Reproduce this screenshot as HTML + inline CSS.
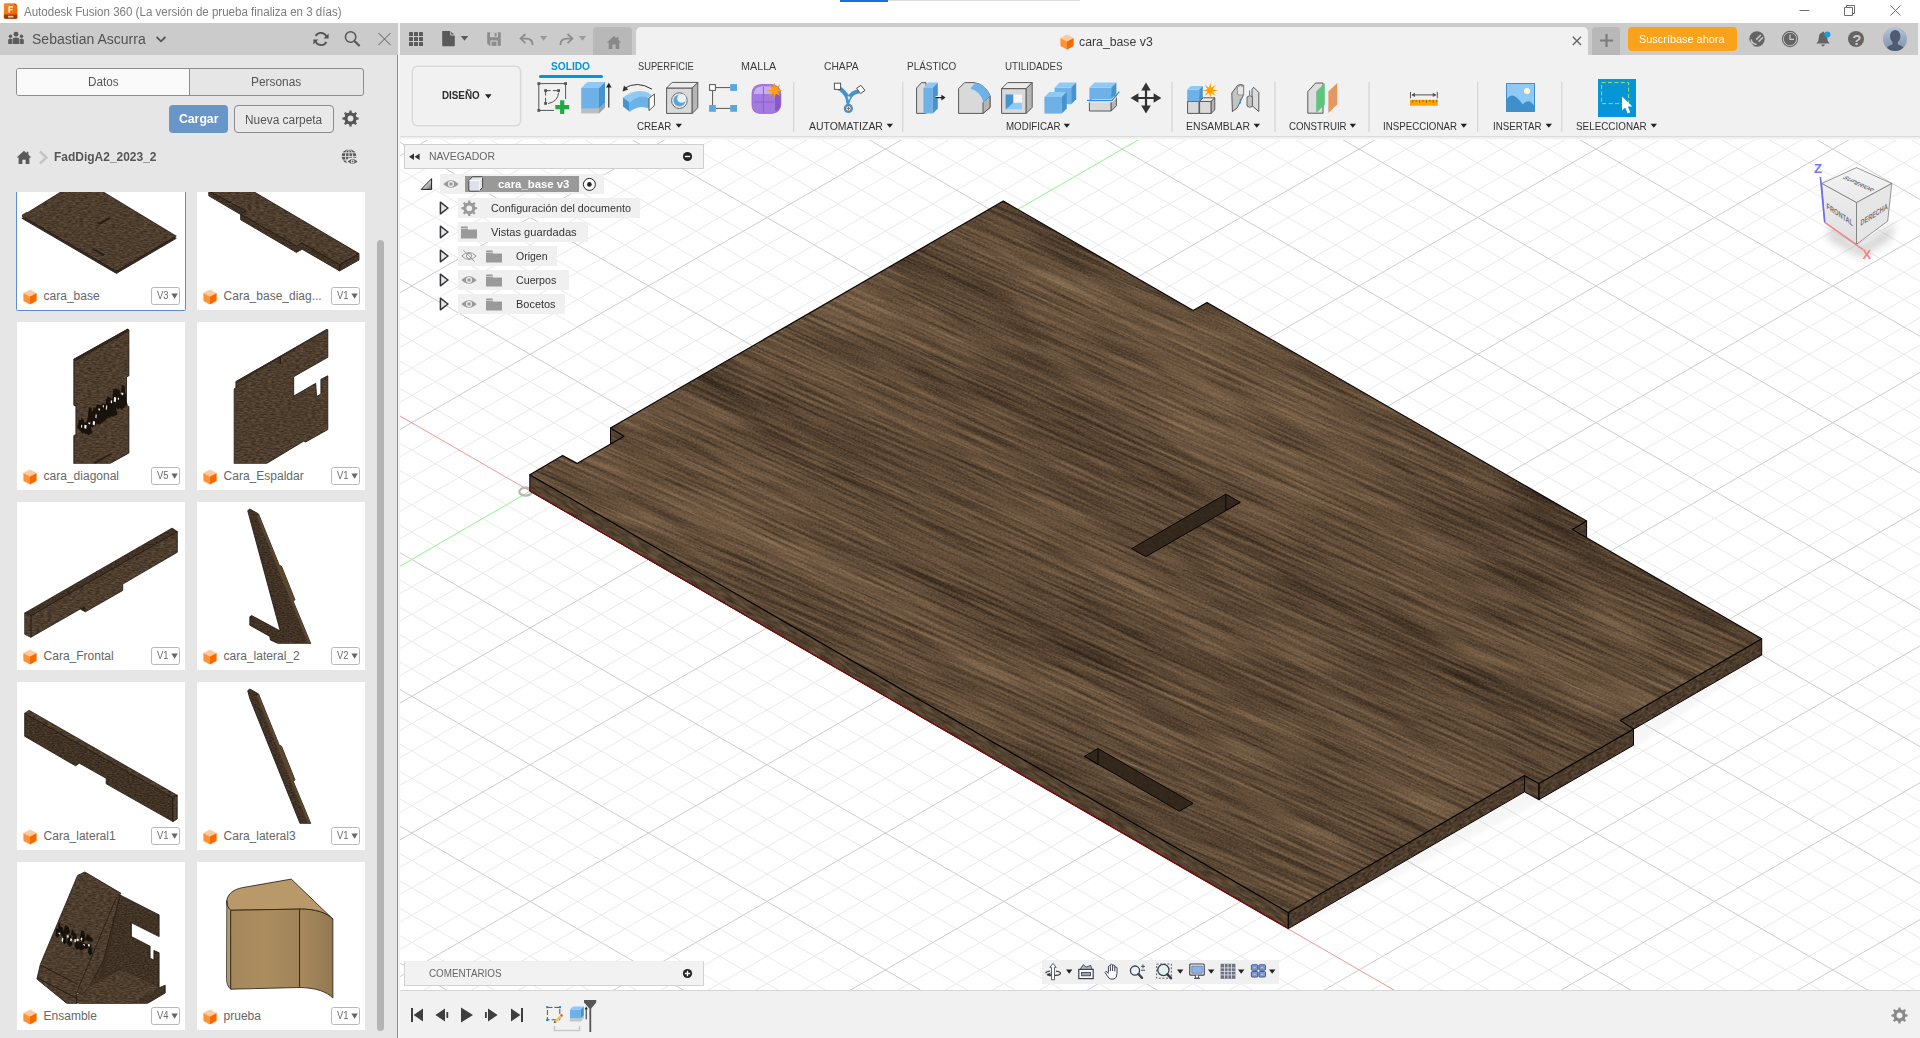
<!DOCTYPE html>
<html lang="es"><head><meta charset="utf-8"><title>Autodesk Fusion 360</title><style>
html,body{margin:0;padding:0;background:#fff}
body{width:1920px;height:1038px;overflow:hidden;position:relative;font-family:"Liberation Sans",sans-serif}
.a{position:absolute;display:block}
.t{position:absolute;white-space:nowrap;transform-origin:0 0;display:block}
svg{overflow:hidden}
</style></head><body>
<svg class="a" style="left:400px;top:140px" width="1520" height="850" viewBox="400 140 1520 850"><path d="M400 990.52L1920 1868.41M400 935.80L1920 1813.69M400 908.44L1920 1786.33M400 881.08L1920 1758.97M400 853.72L1920 1731.61M400 799.00L1920 1676.89M400 771.64L1920 1649.53M400 744.28L1920 1622.17M400 716.92L1920 1594.81M400 662.20L1920 1540.09M400 634.84L1920 1512.73M400 607.48L1920 1485.37M400 580.12L1920 1458.01M400 525.40L1920 1403.29M400 498.04L1920 1375.93M400 470.68L1920 1348.57M400 443.32L1920 1321.21M400 388.60L1920 1266.49M400 361.24L1920 1239.13M400 333.88L1920 1211.77M400 306.52L1920 1184.41M400 251.80L1920 1129.69M400 224.44L1920 1102.33M400 197.08L1920 1074.97M400 169.72L1920 1047.61M400 115.00L1920 992.89M400 87.64L1920 965.53M400 60.28L1920 938.17M400 32.92L1920 910.81M400 -21.80L1920 856.09M400 -49.16L1920 828.73M400 -76.52L1920 801.37M400 -103.88L1920 774.01M400 -158.60L1920 719.29M400 -185.96L1920 691.93M400 -213.32L1920 664.57M400 -240.68L1920 637.21M400 -295.40L1920 582.49M400 -322.76L1920 555.13M400 -350.12L1920 527.77M400 -377.48L1920 500.41M400 -432.20L1920 445.69M400 -459.56L1920 418.33M400 -486.92L1920 390.97M400 -514.28L1920 363.61M400 -569.00L1920 308.89M400 -596.36L1920 281.53M400 -623.72L1920 254.17M400 -651.08L1920 226.81M400 -705.80L1920 172.09M400 -733.16L1920 144.73M400 183.20L1920 -694.69M400 210.56L1920 -667.33M400 237.92L1920 -639.97M400 265.28L1920 -612.61M400 320.00L1920 -557.89M400 347.36L1920 -530.53M400 374.72L1920 -503.17M400 402.08L1920 -475.81M400 456.80L1920 -421.09M400 484.16L1920 -393.73M400 511.52L1920 -366.37M400 538.88L1920 -339.01M400 593.60L1920 -284.29M400 620.96L1920 -256.93M400 648.32L1920 -229.57M400 675.68L1920 -202.21M400 730.40L1920 -147.49M400 757.76L1920 -120.13M400 785.12L1920 -92.77M400 812.48L1920 -65.41M400 867.20L1920 -10.69M400 894.56L1920 16.67M400 921.92L1920 44.03M400 949.28L1920 71.39M400 1004.00L1920 126.11M400 1031.36L1920 153.47M400 1058.72L1920 180.83M400 1086.08L1920 208.19M400 1140.80L1920 262.91M400 1168.16L1920 290.27M400 1195.52L1920 317.63M400 1222.88L1920 344.99M400 1277.60L1920 399.71M400 1304.96L1920 427.07M400 1332.32L1920 454.43M400 1359.68L1920 481.79M400 1414.40L1920 536.51M400 1441.76L1920 563.87M400 1469.12L1920 591.23M400 1496.48L1920 618.59M400 1551.20L1920 673.31M400 1578.56L1920 700.67M400 1605.92L1920 728.03M400 1633.28L1920 755.39M400 1688.00L1920 810.11M400 1715.36L1920 837.47M400 1742.72L1920 864.83M400 1770.08L1920 892.19M400 1824.80L1920 946.91M400 1852.16L1920 974.27" stroke="#e9e9e9" stroke-width="1" fill="none"/><path d="M400 963.16L1920 1841.05M400 826.36L1920 1704.25M400 689.56L1920 1567.45M400 552.76L1920 1430.65M400 279.16L1920 1157.05M400 142.36L1920 1020.25M400 5.56L1920 883.45M400 -131.24L1920 746.65M400 -268.04L1920 609.85M400 -404.84L1920 473.05M400 -541.64L1920 336.25M400 -678.44L1920 199.45M400 155.84L1920 -722.05M400 292.64L1920 -585.25M400 429.44L1920 -448.45M400 703.04L1920 -174.85M400 839.84L1920 -38.05M400 976.64L1920 98.75M400 1113.44L1920 235.55M400 1250.24L1920 372.35M400 1387.04L1920 509.15M400 1523.84L1920 645.95M400 1660.64L1920 782.75M400 1797.44L1920 919.55" stroke="#cdcdcd" stroke-width="1" fill="none"/><path d="M400 415.96L1920 1293.85" stroke="#f79494" stroke-width="1" fill="none"/><path d="M400 566.24L1920 -311.65" stroke="#8cf58c" stroke-width="1" fill="none"/><ellipse cx="525.6" cy="491.70000000000005" rx="6.2" ry="4" fill="none" stroke="#b6b6b6" stroke-width="2.2"/><defs>
<filter id="wood" filterUnits="userSpaceOnUse" x="380" y="-220" width="1540" height="1560" color-interpolation-filters="sRGB">
<feTurbulence type="fractalNoise" baseFrequency="0.011 0.33" numOctaves="3" seed="11"/>
<feColorMatrix type="matrix" values="1 0 0 0 0 1 0 0 0 0 1 0 0 0 0 0 0 0 0 1" result="a"/>
<feTurbulence type="fractalNoise" baseFrequency="0.0022 0.022" numOctaves="2" seed="4"/>
<feColorMatrix type="matrix" values="1 0 0 0 0 1 0 0 0 0 1 0 0 0 0 0 0 0 0 1" result="b"/>
<feTurbulence type="fractalNoise" baseFrequency="0.5 0.9" numOctaves="2" seed="2"/>
<feColorMatrix type="matrix" values="1 0 0 0 0 1 0 0 0 0 1 0 0 0 0 0 0 0 0 1" result="c"/>
<feComposite in="a" in2="b" operator="arithmetic" k1="0" k2="0.62" k3="0.38" k4="0" result="ab"/>
<feComposite in="ab" in2="c" operator="arithmetic" k1="0" k2="1" k3="0.38" k4="-0.19"/>
<feComponentTransfer><feFuncR type="table" tableValues="0.13 0.21 0.37 0.52 0.60"/><feFuncG type="table" tableValues="0.095 0.16 0.292 0.415 0.485"/><feFuncB type="table" tableValues="0.065 0.115 0.215 0.31 0.365"/></feComponentTransfer>
</filter>
<filter id="woodd" filterUnits="userSpaceOnUse" x="380" y="-220" width="1540" height="1560" color-interpolation-filters="sRGB">
<feTurbulence type="fractalNoise" baseFrequency="0.25 0.45" numOctaves="2" seed="5"/>
<feColorMatrix type="matrix" values="1 0 0 0 0 1 0 0 0 0 1 0 0 0 0 0 0 0 0 1" result="a"/>
<feTurbulence type="fractalNoise" baseFrequency="0.5 0.8" numOctaves="1" seed="9"/>
<feColorMatrix type="matrix" values="1 0 0 0 0 1 0 0 0 0 1 0 0 0 0 0 0 0 0 1" result="c"/>
<feComposite in="a" in2="c" operator="arithmetic" k1="0" k2="1" k3="0.25" k4="-0.125"/>
<feComponentTransfer><feFuncR type="table" tableValues="0.17 0.22 0.30 0.38 0.43"/><feFuncG type="table" tableValues="0.125 0.17 0.235 0.30 0.34"/><feFuncB type="table" tableValues="0.09 0.12 0.175 0.225 0.255"/></feComponentTransfer>
</filter>
<filter id="woodl" filterUnits="userSpaceOnUse" x="380" y="-220" width="1540" height="1560" color-interpolation-filters="sRGB">
<feTurbulence type="fractalNoise" baseFrequency="0.08 0.45" numOctaves="2" seed="6"/>
<feColorMatrix type="matrix" values="1 0 0 0 0 1 0 0 0 0 1 0 0 0 0 0 0 0 0 1" result="a"/>
<feTurbulence type="fractalNoise" baseFrequency="0.5 0.8" numOctaves="1" seed="9"/>
<feColorMatrix type="matrix" values="1 0 0 0 0 1 0 0 0 0 1 0 0 0 0 0 0 0 0 1" result="c"/>
<feComposite in="a" in2="c" operator="arithmetic" k1="0" k2="1" k3="0.25" k4="-0.125"/>
<feComponentTransfer><feFuncR type="table" tableValues="0.20 0.25 0.33 0.41 0.46"/><feFuncG type="table" tableValues="0.15 0.195 0.262 0.33 0.37"/><feFuncB type="table" tableValues="0.105 0.14 0.192 0.245 0.28"/></feComponentTransfer>
</filter>
<filter id="bsh" x="-10%" y="-10%" width="120%" height="130%"><feGaussianBlur stdDeviation="2"/></filter>
<clipPath id="ctop"><polygon points="529.8,474.8 562.6,455.6 577.0,463.4 624.0,436.3 610.5,428.0 1003.3,201.1 1193.2,310.6 1207.0,302.4 1586.6,521.0 1572.3,529.5 1761.7,638.8 1620.3,720.6 1633.5,729.0 1538.9,783.5 1524.5,775.6 1288.3,912.4"/></clipPath><clipPath id="csl"><polygon points="624.0,436.3 610.5,428.0 610.5,444.2 624.0,452.5"/><polygon points="1538.9,783.5 1524.5,775.6 1524.5,791.8 1538.9,799.7"/><polygon points="1288.3,912.4 529.8,474.8 529.8,491.0 1288.3,928.6"/></clipPath><clipPath id="csr"><polygon points="1586.6,521.0 1572.3,529.5 1572.3,545.7 1586.6,537.2"/><polygon points="1761.7,638.8 1620.3,720.6 1620.3,736.8 1761.7,655.0"/><polygon points="1633.5,729.0 1538.9,783.5 1538.9,799.7 1633.5,745.2"/><polygon points="1524.5,775.6 1288.3,912.4 1288.3,928.6 1524.5,791.8"/></clipPath><clipPath id="cslot"><polygon points="1225.9,494.1 1240.3,502.3 1145.8,556.7 1131.7,548.6"/><polygon points="1098.0,748.5 1193.1,803.3 1179.3,811.2 1084.5,756.3"/></clipPath></defs><polygon points="1762.7,658.0 1634.5,748.7 1539.9,802.6 1289.3,931.6 1289.3,915.0 1762.7,643.0" fill="#000" opacity="0.03" filter="url(#bsh)"/><g clip-path="url(#csl)"><g transform="rotate(30 1150 560)"><rect x="380" y="-220" width="1540" height="1560" filter="url(#woodl)"/></g></g><g clip-path="url(#csr)"><g transform="rotate(-30 1150 560)"><rect x="380" y="-220" width="1540" height="1560" filter="url(#woodd)"/></g></g><polygon points="624.0,436.3 610.5,428.0 610.5,444.2 624.0,452.5" fill="none" stroke="#0a0604" stroke-width="1" stroke-linejoin="round"/><polygon points="1586.6,521.0 1572.3,529.5 1572.3,545.7 1586.6,537.2" fill="none" stroke="#0a0604" stroke-width="1" stroke-linejoin="round"/><polygon points="1761.7,638.8 1620.3,720.6 1620.3,736.8 1761.7,655.0" fill="none" stroke="#0a0604" stroke-width="1" stroke-linejoin="round"/><polygon points="1633.5,729.0 1538.9,783.5 1538.9,799.7 1633.5,745.2" fill="none" stroke="#0a0604" stroke-width="1" stroke-linejoin="round"/><polygon points="1538.9,783.5 1524.5,775.6 1524.5,791.8 1538.9,799.7" fill="none" stroke="#0a0604" stroke-width="1" stroke-linejoin="round"/><polygon points="1524.5,775.6 1288.3,912.4 1288.3,928.6 1524.5,791.8" fill="none" stroke="#0a0604" stroke-width="1" stroke-linejoin="round"/><polygon points="1288.3,912.4 529.8,474.8 529.8,491.0 1288.3,928.6" fill="none" stroke="#0a0604" stroke-width="1" stroke-linejoin="round"/><path d="M529.8 491.0L1288.3 928.6" stroke="#7e0808" stroke-width="1.2" fill="none"/><g clip-path="url(#ctop)"><g transform="rotate(24 1150 560)"><rect x="380" y="-220" width="1540" height="1560" filter="url(#wood)"/></g></g><path clip-path="url(#ctop)" d="M400 -492.4L1920 168.8M400 -463.7L1920 197.5M400 -434.6L1920 226.6M400 -404.1L1920 257.1M400 -375.4L1920 285.8M400 -345.1L1920 316.1M400 -322.9L1920 338.3M400 -296.7L1920 364.5M400 -266.2L1920 395.0M400 -238.3L1920 422.9M400 -208.2L1920 453.0M400 -185.2L1920 476.0M400 -159.0L1920 502.2M400 -134.8L1920 526.4M400 -107.9L1920 553.3M400 -80.7L1920 580.5M400 -58.6L1920 602.6M400 -34.6L1920 626.6M400 -10.1L1920 651.1M400 20.1L1920 681.3M400 49.0L1920 710.2M400 72.4L1920 733.6M400 101.6L1920 762.8M400 124.9L1920 786.1M400 152.4L1920 813.6M400 175.6L1920 836.8M400 197.6L1920 858.8M400 227.4L1920 888.6M400 251.3L1920 912.5M400 275.3L1920 936.5M400 306.1L1920 967.3M400 335.9L1920 997.1M400 360.6L1920 1021.8M400 391.2L1920 1052.4M400 418.1L1920 1079.3M400 446.2L1920 1107.4M400 470.0L1920 1131.2M400 500.5L1920 1161.7M400 528.7L1920 1189.9M400 559.4L1920 1220.6M400 589.4L1920 1250.6M400 614.1L1920 1275.3M400 639.4L1920 1300.6M400 662.9L1920 1324.1M400 686.2L1920 1347.4M400 708.8L1920 1370.0M400 733.5L1920 1394.7M400 760.9L1920 1422.1M400 782.9L1920 1444.1M400 811.0L1920 1472.2M400 836.1L1920 1497.3M400 860.9L1920 1522.1M400 890.2L1920 1551.4M400 916.6L1920 1577.8M400 941.4L1920 1602.6M400 967.7L1920 1628.9M400 996.1L1920 1657.3M400 1018.6L1920 1679.8" stroke="#b9b0a4" stroke-opacity="0.17" stroke-width="0.8" fill="none"/><g clip-path="url(#cslot)"><rect x="1080" y="490" width="170" height="330" fill="#2e2319"/><g opacity="0.22" transform="rotate(30 1150 560)"><rect x="380" y="-220" width="1540" height="1560" filter="url(#woodd)"/></g></g><polygon points="1225.9,494.1 1240.3,502.3 1145.8,556.7 1131.7,548.6" fill="none" stroke="#0a0604" stroke-width="1"/><polygon points="1098.0,748.5 1193.1,803.3 1179.3,811.2 1084.5,756.3" fill="none" stroke="#0a0604" stroke-width="1"/><path d="M1225.9 494.1V510.3L1240.3 502.3M1098 748.5V764.6L1084.5 756.3" stroke="#0a0604" stroke-width="1" fill="none"/><polygon points="529.8,474.8 562.6,455.6 577.0,463.4 624.0,436.3 610.5,428.0 1003.3,201.1 1193.2,310.6 1207.0,302.4 1586.6,521.0 1572.3,529.5 1761.7,638.8 1620.3,720.6 1633.5,729.0 1538.9,783.5 1524.5,775.6 1288.3,912.4" fill="none" stroke="#0a0604" stroke-width="1.2" stroke-linejoin="round"/></svg>
<div class="a" style="left:0px;top:0px;width:1920px;height:23px;background:#fff;"></div>
<div class="a" style="left:840px;top:0px;width:48px;height:2px;background:#1f6fd0;"></div>
<div class="a" style="left:888px;top:0px;width:192px;height:1px;background:#dcdcdc;"></div>
<svg class="a" style="left:3px;top:2px;" width="16" height="18" viewBox="0 0 16 18"><defs><linearGradient id="fz" x1="0" y1="0" x2="1" y2="1"><stop offset="0" stop-color="#ff8a1f"/><stop offset="1" stop-color="#f05a00"/></linearGradient></defs>
<path d="M2.2 1.2H11.5L14.3 3.3V15.4Q14.3 16.8 13 16.8H2.2Q0.9 16.8 0.9 15.4V2.5Q0.9 1.2 2.2 1.2Z" fill="url(#fz)"/>
<path d="M0.9 12.6H14.3V15.4Q14.3 16.8 13 16.8H2.2Q0.9 16.8 0.9 15.4Z" fill="#9c3a05"/>
<path d="M11.5 1.2L14.3 3.3H11.5Z" fill="#c44a02"/>
<path d="M5.4 10.6V4.3H10V5.6H6.9V6.9H9.5V8.2H6.9V10.6Z" fill="#fff"/>
<rect x="5" y="13.8" width="5.4" height="1.7" fill="#f7c9a8"/></svg>
<span class="t" style="left:23.50px;top:6.04px;font-size:12px;line-height:12px;color:#7c7c7c;transform:scaleX(0.9616);">Autodesk Fusion 360 (La versión de prueba finaliza en 3 días)</span>
<svg class="a" style="left:1790px;top:0px;" width="130" height="23" viewBox="0 0 130 23"><g stroke="#6e6e6e" stroke-width="1" fill="none"><path d="M9.5 10.5H19.5"/><path d="M54.5 7.5H62.5V15.5H54.5ZM56.5 7.5V5.5H64.5V13.5H62.5"/><path d="M100.5 5.5L110.5 15.5M110.5 5.5L100.5 15.5"/></g></svg>
<div class="a" style="left:0px;top:23px;width:398px;height:32px;background:#cbcbcb;"></div>
<svg class="a" style="left:8px;top:31px;" width="17" height="14" viewBox="0 0 17 14"><g fill="#5c5c5c"><circle cx="8" cy="3.2" r="2.4"/><path d="M4.6 13V8.6Q4.6 6.4 8 6.4Q11.4 6.4 11.4 8.6V13Z"/><circle cx="2.5" cy="5.2" r="1.7"/><path d="M0.2 13V9.6Q0.2 7.6 2.5 7.6Q3.8 7.6 4 8.2V13Z"/><circle cx="13.5" cy="5.2" r="1.7"/><path d="M15.8 13V9.6Q15.8 7.6 13.5 7.6Q12.2 7.6 12 8.2V13Z"/></g></svg>
<span class="t" style="left:32.30px;top:32.15px;font-size:14px;line-height:14px;color:#525252;transform:scaleX(1.0008);">Sebastian Ascurra</span>
<svg class="a" style="left:155px;top:35px;" width="12" height="9" viewBox="0 0 12 9"><path d="M1.6 2L6 6.3L10.4 2" stroke="#555" stroke-width="1.8" fill="none"/></svg>
<svg class="a" style="left:312px;top:31px;" width="18" height="16" viewBox="0 0 18 16"><g stroke="#555" stroke-width="1.9" fill="none"><path d="M14.6 6.2A6 6 0 0 0 3.6 5"/><path d="M3.4 9.8A6 6 0 0 0 14.4 11"/></g><path d="M16.6 2.6V7.6H11.6Z" fill="#555"/><path d="M1.4 13.4V8.4H6.4Z" fill="#555"/></svg>
<svg class="a" style="left:344px;top:30px;" width="18" height="17" viewBox="0 0 18 17"><circle cx="6.6" cy="7" r="5.2" stroke="#555" stroke-width="1.5" fill="none"/><path d="M10.4 10.9L15.6 16" stroke="#555" stroke-width="2.1"/></svg>
<svg class="a" style="left:377px;top:32px;" width="15" height="14" viewBox="0 0 15 14"><path d="M1.5 1L13.5 13M13.5 1L1.5 13" stroke="#5c5c5c" stroke-width="1"/></svg>
<div class="a" style="left:400px;top:23px;width:1518px;height:32px;background:#cbcbcb;"></div>
<div class="a" style="left:1918px;top:23px;width:2px;height:32px;background:#f0f0f0;"></div>
<svg class="a" style="left:408px;top:31px;" width="16" height="16" viewBox="0 0 16 16"><rect x="1" y="1" width="4" height="4" rx="0.6" fill="#5a5a5a"/><rect x="1" y="6" width="4" height="4" rx="0.6" fill="#5a5a5a"/><rect x="1" y="11" width="4" height="4" rx="0.6" fill="#5a5a5a"/><rect x="6" y="1" width="4" height="4" rx="0.6" fill="#5a5a5a"/><rect x="6" y="6" width="4" height="4" rx="0.6" fill="#5a5a5a"/><rect x="6" y="11" width="4" height="4" rx="0.6" fill="#5a5a5a"/><rect x="11" y="1" width="4" height="4" rx="0.6" fill="#5a5a5a"/><rect x="11" y="6" width="4" height="4" rx="0.6" fill="#5a5a5a"/><rect x="11" y="11" width="4" height="4" rx="0.6" fill="#5a5a5a"/></svg>
<svg class="a" style="left:441px;top:30px;" width="16" height="18" viewBox="0 0 16 18"><path d="M1.2 1H9.3L13.8 5.5V15.4Q13.8 16.2 13 16.2H2Q1.2 16.2 1.2 15.4Z" fill="#5a5a5a"/><path d="M9.6 0.8V5.2H14" fill="#cbcbcb" stroke="#cbcbcb" stroke-width="0.6"/><path d="M10.2 1.8L13 4.6H10.2Z" fill="#5a5a5a"/></svg>
<svg class="a" style="left:460px;top:35px;" width="9" height="7" viewBox="0 0 9 7"><path d="M0.8 1H8.2L4.5 5.8Z" fill="#5a5a5a"/></svg>
<svg class="a" style="left:486px;top:31px;" width="16" height="16" viewBox="0 0 16 16"><path d="M1.2 1.2H14.8V14.8H3.6L1.2 12.4Z" fill="#8c8c8c"/><rect x="4" y="1.2" width="8" height="5" fill="#cbcbcb"/><rect x="8.6" y="2" width="2" height="3.4" fill="#8c8c8c"/><rect x="4.4" y="9.4" width="7.2" height="5.4" fill="#cbcbcb"/><rect x="5.6" y="10.6" width="4.8" height="4.2" fill="#8c8c8c"/></svg>
<svg class="a" style="left:519px;top:32px;" width="16" height="14" viewBox="0 0 16 14"><path d="M13.6 13Q13.6 6.6 7 6.6H3" stroke="#8c8c8c" stroke-width="1.8" fill="none"/><path d="M6.4 2L1.6 6.6L6.4 11.2" stroke="#8c8c8c" stroke-width="1.8" fill="none"/></svg>
<svg class="a" style="left:539px;top:35px;" width="9" height="7" viewBox="0 0 9 7"><path d="M0.8 1H8.2L4.5 5.8Z" fill="#9a9a9a"/></svg>
<svg class="a" style="left:558px;top:32px;" width="16" height="14" viewBox="0 0 16 14"><path d="M2.4 13Q2.4 6.6 9 6.6H13" stroke="#8c8c8c" stroke-width="1.8" fill="none"/><path d="M9.6 2L14.4 6.6L9.6 11.2" stroke="#8c8c8c" stroke-width="1.8" fill="none"/></svg>
<svg class="a" style="left:578px;top:35px;" width="9" height="7" viewBox="0 0 9 7"><path d="M0.8 1H8.2L4.5 5.8Z" fill="#9a9a9a"/></svg>
<div class="a" style="left:593px;top:27px;width:39px;height:28px;background:#b8b8b8;border-radius:4px 4px 0 0;"></div>
<svg class="a" style="left:606px;top:35px;" width="16" height="15" viewBox="0 0 16 15"><path d="M8 1L0.8 7.6H2.8V14H6.4V9.6H9.6V14H13.2V7.6H15.2L12.4 5V2H10.6V3.4Z" fill="#888"/></svg>
<div class="a" style="left:636px;top:27px;width:952px;height:28px;background:#f1f1f1;border-radius:5px 5px 0 0;"></div>
<svg class="a" style="left:1060px;top:34px;" width="14" height="16" viewBox="0 0 14 16"><g transform="scale(1.000)"><path d="M7 0.4L13.6 3.9L7 7.6L0.4 3.9Z" fill="#ffc9a0"/><path d="M0.4 3.9L7 7.6V15.6L0.4 12Z" fill="#ff9234"/><path d="M13.6 3.9L7 7.6V15.6L13.6 12Z" fill="#f86a00"/></g></svg>
<span class="t" style="left:1079.20px;top:35.64px;font-size:12px;line-height:12px;color:#3c3c3c;transform:scaleX(1.0230);">cara_base v3</span>
<svg class="a" style="left:1571px;top:35px;" width="12" height="12" viewBox="0 0 12 12"><path d="M1.8 1.8L10 10M10 1.8L1.8 10" stroke="#666" stroke-width="1.4"/></svg>
<div class="a" style="left:1592px;top:27px;width:28px;height:28px;background:#b8b8b8;border-radius:4px 4px 0 0;"></div>
<svg class="a" style="left:1599px;top:33px;" width="15" height="15" viewBox="0 0 15 15"><path d="M7.5 1V14M1 7.5H14" stroke="#7c7c7c" stroke-width="2.2"/></svg>
<div class="a" style="left:1628px;top:27px;width:109px;height:24px;background:#faa21b;border-radius:4px;"></div>
<span class="t" style="left:1638.90px;top:33.69px;font-size:11px;line-height:11px;color:#fff;transform:scaleX(0.9918);">Suscríbase ahora</span>
<svg class="a" style="left:1748px;top:30px;" width="18" height="18" viewBox="0 0 18 18"><circle cx="9" cy="9" r="7.7" fill="#646464"/><path d="M3.2 9.4Q3.4 13.6 8.6 14.6" stroke="#cbcbcb" stroke-width="1.5" fill="none"/><path d="M1.2 11.6L5.4 16.8" stroke="#cbcbcb" stroke-width="1.6" fill="none"/><path d="M8.2 9.6L12.8 5M10.6 11.6L15 7.2" stroke="#cbcbcb" stroke-width="1.5" fill="none"/><path d="M11.6 1.6L16.6 6.4L17.6 1Z" fill="#cbcbcb" opacity="0.0"/></svg>
<svg class="a" style="left:1781px;top:30px;" width="18" height="18" viewBox="0 0 18 18"><circle cx="9" cy="9" r="7.6" stroke="#646464" stroke-width="1.1" fill="none"/><circle cx="9" cy="9" r="6.2" fill="#646464"/><path d="M9 4.6V9.4H13" stroke="#cbcbcb" stroke-width="1.3" fill="none"/></svg>
<svg class="a" style="left:1814px;top:30px;" width="18" height="18" viewBox="0 0 18 18"><path d="M9 1.4Q9.9 1.4 9.9 2.6Q13.2 3.6 13.2 8Q13.2 11.4 15.6 13.4H2.4Q4.8 11.4 4.8 8Q4.8 3.6 8.1 2.6Q8.1 1.4 9 1.4Z" fill="#646464"/><path d="M7 14.6H11Q10.6 16.4 9 16.4Q7.4 16.4 7 14.6Z" fill="#646464"/><circle cx="13.4" cy="4.6" r="3" fill="#1b9be0"/></svg>
<svg class="a" style="left:1847px;top:30px;" width="18" height="18" viewBox="0 0 18 18"><circle cx="9" cy="9" r="8" fill="#646464"/></svg>
<span class="t" style="left:1852.30px;top:31.60px;font-size:15px;line-height:15px;color:#cbcbcb;font-weight:bold;">?</span>
<svg class="a" style="left:1883px;top:27px;" width="24" height="24" viewBox="0 0 24 24"><defs><linearGradient id="av" x1="0" y1="0" x2="0" y2="1"><stop offset="0" stop-color="#b4c3d8"/><stop offset="1" stop-color="#7e8fab"/></linearGradient><clipPath id="avc"><circle cx="12" cy="12" r="12"/></clipPath></defs>
<circle cx="12" cy="12" r="12" fill="url(#av)"/><g clip-path="url(#avc)" fill="#4f5b72"><ellipse cx="12.2" cy="9.4" rx="5.2" ry="6.4"/><path d="M9.6 14H14.8V18.4H9.6Z"/><path d="M2.6 25Q3 19 9.4 17.6H15Q21.4 19 21.8 25Z"/></g></svg>
<div class="a" style="left:0px;top:55px;width:397px;height:983px;background:#e6e6e6;"></div>
<div class="a" style="left:397px;top:55px;width:1px;height:983px;background:#8e8e8e;"></div>
<div class="a" style="left:398px;top:23px;width:2px;height:1015px;background:#f4f4f4;"></div>
<div class="a" style="left:16px;top:68px;width:348px;height:28px;background:#e6e6e6;box-sizing:border-box;border:1px solid #8c8c8c;border-radius:3px;"></div>
<div class="a" style="left:17px;top:69px;width:172px;height:26px;background:#fafafa;border-radius:2px 0 0 2px;"></div>
<div class="a" style="left:189px;top:69px;width:1px;height:26px;background:#8c8c8c;"></div>
<span class="t" style="left:87.60px;top:76.04px;font-size:12px;line-height:12px;color:#555;transform:scaleX(0.9762);">Datos</span>
<span class="t" style="left:251.30px;top:76.04px;font-size:12px;line-height:12px;color:#555;transform:scaleX(0.9903);">Personas</span>
<div class="a" style="left:169px;top:105px;width:59px;height:28px;background:#6896c9;border-radius:4px;"></div>
<span class="t" style="left:179.00px;top:113.04px;font-size:12px;line-height:12px;color:#fff;font-weight:bold;transform:scaleX(1.0185);">Cargar</span>
<div class="a" style="left:234px;top:105px;width:100px;height:28px;background:#e9e9e9;box-sizing:border-box;border:1px solid #8c8c8c;border-radius:4px;"></div>
<span class="t" style="left:245.30px;top:113.64px;font-size:12px;line-height:12px;color:#555;transform:scaleX(0.9892);">Nueva carpeta</span>
<svg class="a" style="left:341.6px;top:110.4px;" width="17" height="17" viewBox="0 0 17 17"><polygon points="7.3,2.6 7.4,0.4 9.6,0.4 9.7,2.6 11.8,3.4 13.5,2.0 15.0,3.5 13.6,5.2 14.4,7.3 16.6,7.4 16.6,9.6 14.4,9.7 13.6,11.8 15.0,13.5 13.5,15.0 11.8,13.6 9.7,14.4 9.6,16.6 7.4,16.6 7.3,14.4 5.2,13.6 3.5,15.0 2.0,13.5 3.4,11.8 2.6,9.7 0.4,9.6 0.4,7.4 2.6,7.3 3.4,5.2 2.0,3.5 3.5,2.0 5.2,3.4" fill="#555"/><circle cx="8.5" cy="8.5" r="5.95" fill="#555"/><circle cx="8.5" cy="8.5" r="2.95" fill="#e6e6e6"/></svg>
<svg class="a" style="left:16px;top:150px;" width="16" height="15" viewBox="0 0 16 15"><path d="M8 0.8L0.6 7.6H2.6V14H6.4V9.8H9.6V14H13.4V7.6H15.4L12.4 4.8V1.8H10.6V3.2Z" fill="#5a5a5a"/></svg>
<svg class="a" style="left:38px;top:150px;" width="11" height="15" viewBox="0 0 11 15"><path d="M2 1.5L8.4 7.5L2 13.5" stroke="#c4c4c4" stroke-width="2.4" fill="none"/></svg>
<span class="t" style="left:54.00px;top:151.44px;font-size:12px;line-height:12px;color:#555;font-weight:bold;transform:scaleX(0.9979);">FadDigA2_2023_2</span>
<svg class="a" style="left:341px;top:148px;" width="18" height="18" viewBox="0 0 18 18"><circle cx="8" cy="8.4" r="7.2" fill="#5a5a5a"/><g stroke="#e6e6e6" stroke-width="0.9" fill="none"><path d="M0.8 8.4H15.2M8 1.2V15.6M1.8 4.8H14.2M1.8 12H14.2"/><ellipse cx="8" cy="8.4" rx="3.6" ry="7.2"/></g><ellipse cx="11.6" cy="13.4" rx="6" ry="4" fill="#e6e6e6"/><path d="M6.6 13.4Q11.6 8.4 16.6 13.4Q11.6 18.2 6.6 13.4Z" fill="#5a5a5a"/><circle cx="11.6" cy="13.4" r="1.9" fill="#e6e6e6"/><circle cx="11.6" cy="13.4" r="0.9" fill="#5a5a5a"/></svg>
<svg class="a" style="left:0;top:192px" width="397" height="846" viewBox="0 192 397 846"><defs><clipPath id="ci1"><rect x="17" y="142" width="168" height="141.7"/></clipPath><clipPath id="ci2"><rect x="197" y="142" width="168" height="141.7"/></clipPath><clipPath id="ci3"><rect x="17" y="322" width="168" height="141.7"/></clipPath><clipPath id="ci4"><rect x="197" y="322" width="168" height="141.7"/></clipPath><clipPath id="ci5"><rect x="17" y="502" width="168" height="141.7"/></clipPath><clipPath id="ci6"><rect x="197" y="502" width="168" height="141.7"/></clipPath><clipPath id="ci7"><rect x="17" y="682" width="168" height="141.7"/></clipPath><clipPath id="ci8"><rect x="197" y="682" width="168" height="141.7"/></clipPath><clipPath id="ci9"><rect x="17" y="862" width="168" height="141.7"/></clipPath><clipPath id="ci10"><rect x="197" y="862" width="168" height="141.7"/></clipPath></defs><rect x="16.5" y="141.5" width="169" height="169" fill="#fff" stroke="#5a8fd8" stroke-width="1" rx="1"/><rect x="151.5" y="287.5" width="28" height="17" rx="2" fill="#fff" stroke="#b9b9b9" stroke-width="1"/><path d="M171.4 293.6H177.8L174.6 298.8Z" fill="#666"/><rect x="197" y="142" width="168" height="168" fill="#fff"/><rect x="331.5" y="287.5" width="28" height="17" rx="2" fill="#fff" stroke="#b9b9b9" stroke-width="1"/><path d="M351.4 293.6H357.8L354.6 298.8Z" fill="#666"/><rect x="17" y="322" width="168" height="168" fill="#fff"/><rect x="151.5" y="467.5" width="28" height="17" rx="2" fill="#fff" stroke="#b9b9b9" stroke-width="1"/><path d="M171.4 473.6H177.8L174.6 478.8Z" fill="#666"/><rect x="197" y="322" width="168" height="168" fill="#fff"/><rect x="331.5" y="467.5" width="28" height="17" rx="2" fill="#fff" stroke="#b9b9b9" stroke-width="1"/><path d="M351.4 473.6H357.8L354.6 478.8Z" fill="#666"/><rect x="17" y="502" width="168" height="168" fill="#fff"/><rect x="151.5" y="647.5" width="28" height="17" rx="2" fill="#fff" stroke="#b9b9b9" stroke-width="1"/><path d="M171.4 653.6H177.8L174.6 658.8Z" fill="#666"/><rect x="197" y="502" width="168" height="168" fill="#fff"/><rect x="331.5" y="647.5" width="28" height="17" rx="2" fill="#fff" stroke="#b9b9b9" stroke-width="1"/><path d="M351.4 653.6H357.8L354.6 658.8Z" fill="#666"/><rect x="17" y="682" width="168" height="168" fill="#fff"/><rect x="151.5" y="827.5" width="28" height="17" rx="2" fill="#fff" stroke="#b9b9b9" stroke-width="1"/><path d="M171.4 833.6H177.8L174.6 838.8Z" fill="#666"/><rect x="197" y="682" width="168" height="168" fill="#fff"/><rect x="331.5" y="827.5" width="28" height="17" rx="2" fill="#fff" stroke="#b9b9b9" stroke-width="1"/><path d="M351.4 833.6H357.8L354.6 838.8Z" fill="#666"/><rect x="17" y="862" width="168" height="168" fill="#fff"/><rect x="151.5" y="1007.5" width="28" height="17" rx="2" fill="#fff" stroke="#b9b9b9" stroke-width="1"/><path d="M171.4 1013.6H177.8L174.6 1018.8Z" fill="#666"/><rect x="197" y="862" width="168" height="168" fill="#fff"/><rect x="331.5" y="1007.5" width="28" height="17" rx="2" fill="#fff" stroke="#b9b9b9" stroke-width="1"/><path d="M351.4 1013.6H357.8L354.6 1018.8Z" fill="#666"/><defs>
<filter id="tw" x="0" y="0" width="100%" height="100%" color-interpolation-filters="sRGB">
<feTurbulence type="fractalNoise" baseFrequency="0.25 0.7" numOctaves="2" seed="3"/>
<feColorMatrix type="matrix" values="1 0 0 0 0 1 0 0 0 0 1 0 0 0 0 0 0 0 0 1"/>
<feComponentTransfer><feFuncR type="table" tableValues="0.19 0.24 0.305 0.375 0.43"/><feFuncG type="table" tableValues="0.14 0.185 0.243 0.30 0.345"/><feFuncB type="table" tableValues="0.10 0.135 0.182 0.23 0.26"/></feComponentTransfer>
<feComposite in2="SourceAlpha" operator="in"/></filter>
<filter id="tw2" x="0" y="0" width="100%" height="100%" color-interpolation-filters="sRGB">
<feTurbulence type="fractalNoise" baseFrequency="0.4 0.9" numOctaves="2" seed="8"/>
<feColorMatrix type="matrix" values="1 0 0 0 0 1 0 0 0 0 1 0 0 0 0 0 0 0 0 1"/>
<feComponentTransfer><feFuncR type="table" tableValues="0.16 0.20 0.255 0.315 0.36"/><feFuncG type="table" tableValues="0.115 0.15 0.20 0.25 0.285"/><feFuncB type="table" tableValues="0.08 0.105 0.145 0.19 0.215"/></feComponentTransfer>
<feComposite in2="SourceAlpha" operator="in"/></filter>
</defs><g><polygon points="21.9,218.3 81.8,181.1 176.3,238.3 116.4,273.4" fill="#3a2c20" stroke="#1c140e" stroke-width="0.8" stroke-linejoin="round" /><polygon points="21.9,216.1 81.8,178.9 176.3,236.1 116.4,271.2" fill="#5e4c3a" filter="url(#tw)"/><polygon points="21.9,216.1 81.8,178.9 176.3,236.1 116.4,271.2" fill="none" stroke="#1c140e" stroke-width="0.7" stroke-linejoin="round" /><polygon points="97.7,223.6 108.9,217.3 110.8,218.6 99.5,225.1" fill="#2a1f16" /><polygon points="92.0,249.2 93.9,248.4 105.2,254.6 103.3,256.1" fill="#2a1f16" /><polygon points="21.9,215.1 26.3,212.0 28.8,213.8 33.2,209.8 35.0,211.0 23.8,218.3" fill="#4a3a2b" /></g><g><polygon points="208.8,191.0 208.8,195.8 240.7,214.5 240.7,219.8 296.4,252.4 302.1,249.2 339.6,270.9 359.0,259.9 359.0,253.6 339.6,264.6 302.1,243.0 296.4,246.1 240.7,214.2 246.3,211.0" fill="#46372a" stroke="#1c140e" stroke-width="0.8" stroke-linejoin="round" /><polygon points="208.8,191.0 208.8,195.8 240.7,214.5 240.7,219.8 296.4,252.4 302.1,249.2 339.6,270.9 359.0,259.9 359.0,253.6 339.6,264.6 302.1,243.0 296.4,246.1 240.7,214.2 246.3,211.0" fill="#46372a" filter="url(#tw2)"/><polygon points="208.8,191.0 252.6,191.0 359.0,253.6 339.6,264.6 302.1,243.0 296.4,246.1 240.7,214.2 246.3,211.0" fill="#5e4c3a" filter="url(#tw)"/><polygon points="208.8,191.0 252.6,191.0 359.0,253.6 339.6,264.6 302.1,243.0 296.4,246.1 240.7,214.2 246.3,211.0" fill="none" stroke="#1c140e" stroke-width="0.8" stroke-linejoin="round" /><path d="M339.6 264.6V270.9" stroke="#1c140e" stroke-width="0.8"/></g><g clip-path="url(#ci3)"><polygon points="73.8,359.3 127.9,329.0 128.9,330.7 128.9,375.8 126.5,377.0 126.5,405.3 128.9,406.5 128.9,453.0 109.7,463.7 73.8,463.7 73.8,435.6 75.9,434.6 75.9,406.2 73.8,405.3" fill="#5a4937" filter="url(#tw)"/><polygon points="73.8,359.3 127.9,329.0 128.9,330.7 128.9,375.8 126.5,377.0 126.5,405.3 128.9,406.5 128.9,453.0 109.7,463.7 73.8,463.7 73.8,435.6 75.9,434.6 75.9,406.2 73.8,405.3" fill="none" stroke="#1c140e" stroke-width="0.8" stroke-linejoin="round" /><polygon points="73.8,359.3 127.9,329.0 128.9,330.7 75.5,360.7" fill="#3a2c20" stroke="#1c140e" stroke-width="0.6" stroke-linejoin="round" /><polygon points="78.9,419.4 82.4,420.5 84.8,428.8 80.6,430.7 77.1,427.9" fill="#1a130d" /><polygon points="81.2,417.9 83.4,419.0 84.9,431.3 82.3,434.0 80.1,430.0" fill="#1a130d" /><polygon points="81.5,419.7 83.8,420.7 85.3,429.2 82.7,431.1 80.4,428.2" fill="#1a130d" /><polygon points="84.3,421.7 86.7,422.7 88.3,432.4 85.5,434.6 83.2,431.4" fill="#1a130d" /><polygon points="86.6,420.6 90.0,421.7 92.3,433.0 88.3,435.5 84.9,431.8" fill="#1a130d" /><polygon points="89.3,410.6 93.4,411.6 96.1,421.9 91.4,424.2 87.3,420.8" fill="#1a130d" /><polygon points="88.8,407.0 91.5,408.0 93.4,423.3 90.2,426.6 87.4,421.7" fill="#1a130d" /><polygon points="90.6,413.0 94.1,414.1 96.5,425.2 92.4,427.6 88.8,424.0" fill="#1a130d" /><polygon points="93.4,407.2 95.6,408.3 97.0,417.8 94.5,420.0 92.2,416.8" fill="#1a130d" /><polygon points="95.5,407.6 98.3,408.6 100.1,421.7 96.9,424.6 94.1,420.3" fill="#1a130d" /><polygon points="96.6,404.3 100.5,405.3 103.1,419.5 98.5,422.6 94.6,418.0" fill="#1a130d" /><polygon points="97.7,404.8 101.0,405.9 103.2,421.7 99.4,425.1 96.1,420.0" fill="#1a130d" /><polygon points="100.8,404.8 105.1,405.8 108.0,414.6 103.0,416.5 98.6,413.6" fill="#1a130d" /><polygon points="101.7,406.3 104.1,407.3 105.7,419.5 102.9,422.2 100.4,418.2" fill="#1a130d" /><polygon points="102.3,403.6 106.2,404.6 108.7,417.6 104.3,420.4 100.4,416.2" fill="#1a130d" /><polygon points="106.4,398.4 110.1,399.5 112.5,412.7 108.2,415.5 104.6,411.3" fill="#1a130d" /><polygon points="107.3,396.6 111.3,397.7 114.0,414.2 109.3,417.7 105.3,412.4" fill="#1a130d" /><polygon points="108.7,398.8 111.0,399.9 112.4,414.1 109.9,417.2 107.6,412.6" fill="#1a130d" /><polygon points="111.0,403.3 114.9,404.3 117.6,414.6 112.9,416.9 109.0,413.5" fill="#1a130d" /><polygon points="112.0,397.6 114.1,398.6 115.5,410.6 113.0,413.2 110.9,409.3" fill="#1a130d" /><polygon points="113.1,388.8 115.3,389.9 116.8,404.7 114.2,407.9 112.0,403.1" fill="#1a130d" /><polygon points="114.7,388.3 117.7,389.3 119.7,405.1 116.2,408.5 113.2,403.5" fill="#1a130d" /><polygon points="116.3,389.0 119.7,390.0 121.9,406.0 118.0,409.4 114.7,404.3" fill="#1a130d" /><polygon points="120.1,394.6 122.8,395.7 124.6,407.2 121.5,409.7 118.8,405.9" fill="#1a130d" /><polygon points="120.6,395.0 124.8,396.1 127.7,405.1 122.7,407.1 118.4,404.1" fill="#1a130d" /><polygon points="121.8,385.0 124.4,386.1 126.1,398.3 123.1,400.9 120.5,396.9" fill="#1a130d" /><polygon points="81.3,424.7 82.3,425.2 81.8,428.0 80.9,427.2" fill="#f0f0f0" /><polygon points="84.5,424.7 86.7,425.2 86.2,428.9 84.2,428.1" fill="#f0f0f0" /><polygon points="88.5,422.3 90.4,422.8 89.9,424.5 88.2,423.6" fill="#f0f0f0" /><polygon points="93.0,420.9 95.1,421.4 94.6,425.5 92.7,424.6" fill="#f0f0f0" /><polygon points="95.7,414.3 96.8,414.8 96.3,418.4 95.3,417.5" fill="#f0f0f0" /><polygon points="98.7,408.2 100.0,408.7 99.5,410.8 98.3,409.9" fill="#f0f0f0" /><polygon points="103.0,405.1 104.0,405.6 103.5,407.7 102.6,406.8" fill="#f0f0f0" /><polygon points="106.2,405.2 107.3,405.7 106.7,410.0 105.8,409.2" fill="#f0f0f0" /><polygon points="110.9,400.2 112.3,400.7 111.8,403.4 110.6,402.5" fill="#f0f0f0" /><polygon points="114.1,397.1 116.2,397.6 115.7,402.2 113.8,401.4" fill="#f0f0f0" /><polygon points="118.0,397.6 119.2,398.2 118.7,400.0 117.7,399.2" fill="#f0f0f0" /><polygon points="121.5,392.6 123.5,393.1 123.0,395.2 121.1,394.3" fill="#f0f0f0" /><polygon points="93.2,462.5 110.9,453.0 111.9,454.2 95.3,463.7" fill="#2a1f16" /></g><g clip-path="url(#ci4)"><polygon points="235.9,381.5 327.8,329.5 327.8,357.3 293.7,376.7 293.7,396.1 315.7,383.3 316.6,396.6 320.9,394.0 320.9,379.3 327.8,375.8 327.8,429.6 305.8,441.9 303.6,441.2 266.3,463.7 234.2,463.7 234.2,388.8 235.9,387.9" fill="#5a4937" filter="url(#tw)"/><polygon points="235.9,381.5 327.8,329.5 327.8,357.3 293.7,376.7 293.7,396.1 315.7,383.3 316.6,396.6 320.9,394.0 320.9,379.3 327.8,375.8 327.8,429.6 305.8,441.9 303.6,441.2 266.3,463.7 234.2,463.7 234.2,388.8 235.9,387.9" fill="none" stroke="#1c140e" stroke-width="0.8" stroke-linejoin="round" /><polygon points="235.9,381.5 326.4,329.0 327.8,329.5 236.8,383.3" fill="#35281d" /><polygon points="279.5,357.3 280.8,356.6 280.8,363.7 279.8,364.2" fill="#1c140e" /></g><g><polygon points="30.8,615.6 177.3,531.5 177.3,552.3 122.7,584.1 122.7,590.5 85.4,611.8 80.2,609.0 30.8,637.3" fill="#54432f" filter="url(#tw)"/><polygon points="30.8,615.6 177.3,531.5 177.3,552.3 122.7,584.1 122.7,590.5 85.4,611.8 80.2,609.0 30.8,637.3" fill="none" stroke="#1c140e" stroke-width="0.8" stroke-linejoin="round" /><polygon points="24.7,613.0 172.1,528.1 177.3,531.5 30.8,615.6" fill="#4a3a2b" filter="url(#tw2)"/><polygon points="24.7,613.0 172.1,528.1 177.3,531.5 30.8,615.6" fill="none" stroke="#1c140e" stroke-width="0.7" stroke-linejoin="round" /><polygon points="24.7,613.0 30.8,615.6 30.8,637.3 24.7,634.3" fill="#5a4835" filter="url(#tw)"/><polygon points="24.7,613.0 30.8,615.6 30.8,637.3 24.7,634.3" fill="none" stroke="#1c140e" stroke-width="0.7" stroke-linejoin="round" /><polygon points="80.2,609.0 85.4,605.6 85.4,611.8" fill="#2e2219" /></g><g clip-path="url(#ci6)"><polygon points="247.7,510.7 249.8,509.0 258.5,513.9 279.3,565.3 281.5,566.2 294.9,599.7 293.3,601.4 310.8,643.7 278.4,643.7 270.3,639.9 269.8,636.4 249.8,625.2 249.8,616.8 251.7,615.6 280.2,630.9 249.8,518.5" fill="#48392b" filter="url(#tw2)"/><polygon points="247.7,510.7 249.8,509.0 258.5,513.9 279.3,565.3 281.5,566.2 294.9,599.7 293.3,601.4 310.8,643.7 278.4,643.7 270.3,639.9 269.8,636.4 249.8,625.2 249.8,616.8 251.7,615.6 280.2,630.9 249.8,518.5" fill="none" stroke="#1c140e" stroke-width="0.8" stroke-linejoin="round" /><polygon points="258.5,513.9 279.3,565.3 281.5,566.2 294.9,599.7 293.3,601.4 310.8,643.7 307.9,643.7 256.7,515.9" fill="#5b4630" /></g><g><polygon points="24.7,713.3 173.0,797.4 173.0,821.6 106.2,783.8 106.2,778.3 79.3,763.2 75.5,765.8 24.7,736.3" fill="#4e3e2e" filter="url(#tw2)"/><polygon points="24.7,713.3 173.0,797.4 173.0,821.6 106.2,783.8 106.2,778.3 79.3,763.2 75.5,765.8 24.7,736.3" fill="none" stroke="#1c140e" stroke-width="0.8" stroke-linejoin="round" /><polygon points="24.7,713.3 29.1,710.3 177.3,795.3 173.0,797.4" fill="#5b4937" filter="url(#tw)"/><polygon points="24.7,713.3 29.1,710.3 177.3,795.3 173.0,797.4" fill="none" stroke="#1c140e" stroke-width="0.7" stroke-linejoin="round" /><polygon points="173.0,797.4 177.3,795.3 177.3,819.0 173.0,821.6" fill="#6a543c" filter="url(#tw)"/><polygon points="173.0,797.4 177.3,795.3 177.3,819.0 173.0,821.6" fill="none" stroke="#1c140e" stroke-width="0.7" stroke-linejoin="round" /></g><g clip-path="url(#ci8)"><polygon points="247.7,690.7 249.8,689.0 258.5,693.9 279.3,745.3 281.5,746.2 294.9,779.7 293.3,781.4 310.8,823.7 300.1,823.7 249.8,698.5" fill="#48392b" filter="url(#tw2)"/><polygon points="247.7,690.7 249.8,689.0 258.5,693.9 279.3,745.3 281.5,746.2 294.9,779.7 293.3,781.4 310.8,823.7 300.1,823.7 249.8,698.5" fill="none" stroke="#1c140e" stroke-width="0.8" stroke-linejoin="round" /><polygon points="258.5,693.9 279.3,745.3 281.5,746.2 294.9,779.7 293.3,781.4 310.8,823.7 307.9,823.7 256.7,695.9" fill="#5b4630" /></g><g clip-path="url(#ci9)"><polygon points="120.1,895.0 159.1,914.9 159.1,936.6 131.4,922.7 131.4,936.6 150.1,946.2 150.1,958.3 153.9,960.0 153.9,950.5 159.1,952.7 159.1,987.8 165.2,985.2 165.2,993.0 147.0,1003.7 79.3,1003.7 103.6,960.0" fill="#4a3a2b" filter="url(#tw2)"/><polygon points="120.1,895.0 159.1,914.9 159.1,936.6 131.4,922.7 131.4,936.6 150.1,946.2 150.1,958.3 153.9,960.0 153.9,950.5 159.1,952.7 159.1,987.8 165.2,985.2 165.2,993.0 147.0,1003.7 79.3,1003.7 103.6,960.0" fill="none" stroke="#1c140e" stroke-width="0.8" stroke-linejoin="round" /><polygon points="75.9,994.7 121.0,969.6 159.1,987.8 131.4,1003.7 75.9,1003.7" fill="#5a4734" filter="url(#tw)"/><polygon points="77.6,875.4 84.9,872.0 121.0,893.3 115.8,899.3 76.7,993.0 76.7,1003.7 67.2,1003.7 36.9,979.1 40.3,964.4" fill="#52412f" filter="url(#tw)"/><polygon points="77.6,875.4 84.9,872.0 121.0,893.3 115.8,899.3 76.7,993.0 76.7,1003.7 67.2,1003.7 36.9,979.1 40.3,964.4" fill="none" stroke="#1c140e" stroke-width="0.8" stroke-linejoin="round" /><polygon points="120.1,895.0 109.7,925.3 99.3,979.4 121.0,969.6 121.0,967.0 103.6,975.6" fill="#3b2d20" /><polygon points="115.8,899.3 120.1,895.0 103.6,960.0 84.5,993.0 76.7,993.0" fill="#66513a" filter="url(#tw)"/><polygon points="115.8,899.3 120.1,895.0 103.6,960.0 84.5,993.0 76.7,993.0" fill="none" stroke="#1c140e" stroke-width="0.6" stroke-linejoin="round" /><polygon points="56.3,928.1 58.1,929.2 59.4,935.9 57.2,937.5 55.3,935.2" fill="#17110c" /><polygon points="58.6,922.1 59.9,923.1 60.8,931.3 59.3,933.1 58.0,930.3" fill="#17110c" /><polygon points="59.4,926.0 62.4,927.0 64.3,933.0 60.9,934.4 58.0,932.3" fill="#17110c" /><polygon points="62.2,930.6 64.5,931.6 66.1,935.8 63.4,936.9 61.1,935.3" fill="#17110c" /><polygon points="63.4,933.9 65.5,934.9 66.9,942.5 64.4,944.2 62.3,941.6" fill="#17110c" /><polygon points="65.0,925.2 67.5,926.3 69.2,933.0 66.3,934.5 63.8,932.2" fill="#17110c" /><polygon points="65.8,925.8 68.5,926.9 70.3,932.9 67.2,934.3 64.5,932.2" fill="#17110c" /><polygon points="68.2,935.1 70.7,936.2 72.3,944.8 69.5,946.7 67.0,943.8" fill="#17110c" /><polygon points="69.1,934.7 71.1,935.8 72.5,944.5 70.1,946.4 68.1,943.5" fill="#17110c" /><polygon points="71.7,929.2 73.2,930.3 74.2,934.8 72.5,936.0 71.0,934.3" fill="#17110c" /><polygon points="73.5,933.6 75.8,934.7 77.3,939.7 74.6,940.9 72.3,939.1" fill="#17110c" /><polygon points="74.1,932.6 75.9,933.7 77.1,940.3 75.0,941.9 73.2,939.6" fill="#17110c" /><polygon points="75.8,938.3 78.2,939.3 79.8,948.0 77.0,949.9 74.6,947.0" fill="#17110c" /><polygon points="77.9,942.6 80.3,943.6 81.9,947.9 79.1,948.9 76.8,947.3" fill="#17110c" /><polygon points="79.5,941.4 82.3,942.5 84.1,949.1 80.9,950.6 78.1,948.3" fill="#17110c" /><polygon points="80.8,932.9 83.4,933.9 85.2,940.5 82.1,942.0 79.5,939.7" fill="#17110c" /><polygon points="81.5,930.2 84.1,931.2 85.9,940.3 82.8,942.3 80.1,939.2" fill="#17110c" /><polygon points="82.6,942.6 84.6,943.7 85.8,947.8 83.6,948.9 81.7,947.3" fill="#17110c" /><polygon points="84.6,943.2 87.3,944.2 89.1,947.8 86.0,948.7 83.3,947.3" fill="#17110c" /><polygon points="86.9,934.0 89.3,935.0 90.9,940.2 88.1,941.5 85.6,939.6" fill="#17110c" /><polygon points="89.0,943.6 91.1,944.7 92.5,953.7 90.0,955.7 87.9,952.7" fill="#17110c" /><polygon points="89.4,936.6 91.6,937.6 93.1,941.1 90.5,942.0 88.2,940.6" fill="#17110c" /><polygon points="58.8,932.4 60.5,932.9 59.9,934.5 58.4,933.7" fill="#f0f0f0" /><polygon points="62.0,937.7 63.4,938.3 62.9,942.1 61.7,941.3" fill="#f0f0f0" /><polygon points="67.4,934.9 68.9,935.4 68.4,938.1 67.0,937.2" fill="#f0f0f0" /><polygon points="70.4,938.2 72.1,938.7 71.5,941.7 70.1,940.8" fill="#f0f0f0" /><polygon points="74.6,938.8 76.1,939.4 75.6,942.6 74.3,941.7" fill="#f0f0f0" /><polygon points="76.7,938.5 78.8,939.0 78.3,941.6 76.4,940.8" fill="#f0f0f0" /><polygon points="81.0,937.4 82.4,937.9 81.9,940.7 80.6,939.8" fill="#f0f0f0" /><polygon points="83.4,944.0 85.1,944.5 84.6,945.9 83.1,945.0" fill="#f0f0f0" /><polygon points="88.3,944.1 90.0,944.6 89.5,946.8 87.9,946.0" fill="#f0f0f0" /><path d="M40.9 965.2L76.7 983.9M37.7 978.2L76.7 998.2" stroke="#20170f" stroke-width="0.9" fill="none"/></g><g><defs><linearGradient id="pf" x1="0" y1="0" x2="1" y2="0"><stop offset="0" stop-color="#a38659"/><stop offset="0.5" stop-color="#ab8d60"/><stop offset="1" stop-color="#a0835a"/></linearGradient><linearGradient id="pr" x1="0" y1="0" x2="1" y2="0"><stop offset="0" stop-color="#a88a5e"/><stop offset="1" stop-color="#927851"/></linearGradient></defs><path d="M226.8 900.7 C227.7 893.7 233.8 889.3 242.6 887.6 L291.3 879.1 L332.9 919.1 C326.7 913.0 316.2 908.9 299.6 909.1 L230.7 910.3 C227.7 907.7 226.5 904.2 226.8 900.7Z" fill="#b9986a" stroke="#241a10" stroke-width="0.8"/><path d="M226.8 900.7 C226.5 904.2 227.7 907.7 230.7 910.3 L230.7 989.2 C227.7 986.6 226.5 983.1 226.5 978.7Z" fill="#b39a75" stroke="#241a10" stroke-width="0.7"/><path d="M230.7 910.3 L299.6 909.1 L299.6 987.5 L230.7 989.2Z" fill="url(#pf)" stroke="#241a10" stroke-width="0.8"/><path d="M299.6 909.1 C316.2 908.9 326.7 913.0 332.9 919.1 L332.9 998.0 C326.7 991.8 316.2 987.8 299.6 987.5Z" fill="url(#pr)" stroke="#241a10" stroke-width="0.8"/></g></svg>
<svg class="a" style="left:23px;top:289px;" width="14" height="16" viewBox="0 0 14 16"><g transform="scale(1.000)"><path d="M7 0.4L13.6 3.9L7 7.6L0.4 3.9Z" fill="#ffc9a0"/><path d="M0.4 3.9L7 7.6V15.6L0.4 12Z" fill="#ff9234"/><path d="M13.6 3.9L7 7.6V15.6L13.6 12Z" fill="#f86a00"/></g></svg>
<span class="t" style="left:43.60px;top:289.64px;font-size:12px;line-height:12px;color:#666;">cara_base</span>
<span class="t" style="left:157.00px;top:290.84px;font-size:10px;line-height:10px;color:#6a6a6a;transform:scaleX(0.9484);">V3</span>
<svg class="a" style="left:203px;top:289px;" width="14" height="16" viewBox="0 0 14 16"><g transform="scale(1.000)"><path d="M7 0.4L13.6 3.9L7 7.6L0.4 3.9Z" fill="#ffc9a0"/><path d="M0.4 3.9L7 7.6V15.6L0.4 12Z" fill="#ff9234"/><path d="M13.6 3.9L7 7.6V15.6L13.6 12Z" fill="#f86a00"/></g></svg>
<span class="t" style="left:223.60px;top:289.64px;font-size:12px;line-height:12px;color:#666;">Cara_base_diag...</span>
<span class="t" style="left:337.00px;top:290.84px;font-size:10px;line-height:10px;color:#6a6a6a;transform:scaleX(0.9484);">V1</span>
<svg class="a" style="left:23px;top:469px;" width="14" height="16" viewBox="0 0 14 16"><g transform="scale(1.000)"><path d="M7 0.4L13.6 3.9L7 7.6L0.4 3.9Z" fill="#ffc9a0"/><path d="M0.4 3.9L7 7.6V15.6L0.4 12Z" fill="#ff9234"/><path d="M13.6 3.9L7 7.6V15.6L13.6 12Z" fill="#f86a00"/></g></svg>
<span class="t" style="left:43.60px;top:469.64px;font-size:12px;line-height:12px;color:#666;">cara_diagonal</span>
<span class="t" style="left:157.00px;top:470.84px;font-size:10px;line-height:10px;color:#6a6a6a;transform:scaleX(0.9484);">V5</span>
<svg class="a" style="left:203px;top:469px;" width="14" height="16" viewBox="0 0 14 16"><g transform="scale(1.000)"><path d="M7 0.4L13.6 3.9L7 7.6L0.4 3.9Z" fill="#ffc9a0"/><path d="M0.4 3.9L7 7.6V15.6L0.4 12Z" fill="#ff9234"/><path d="M13.6 3.9L7 7.6V15.6L13.6 12Z" fill="#f86a00"/></g></svg>
<span class="t" style="left:223.60px;top:469.64px;font-size:12px;line-height:12px;color:#666;">Cara_Espaldar</span>
<span class="t" style="left:337.00px;top:470.84px;font-size:10px;line-height:10px;color:#6a6a6a;transform:scaleX(0.9484);">V1</span>
<svg class="a" style="left:23px;top:649px;" width="14" height="16" viewBox="0 0 14 16"><g transform="scale(1.000)"><path d="M7 0.4L13.6 3.9L7 7.6L0.4 3.9Z" fill="#ffc9a0"/><path d="M0.4 3.9L7 7.6V15.6L0.4 12Z" fill="#ff9234"/><path d="M13.6 3.9L7 7.6V15.6L13.6 12Z" fill="#f86a00"/></g></svg>
<span class="t" style="left:43.60px;top:649.64px;font-size:12px;line-height:12px;color:#666;">Cara_Frontal</span>
<span class="t" style="left:157.00px;top:650.83px;font-size:10px;line-height:10px;color:#6a6a6a;transform:scaleX(0.9484);">V1</span>
<svg class="a" style="left:203px;top:649px;" width="14" height="16" viewBox="0 0 14 16"><g transform="scale(1.000)"><path d="M7 0.4L13.6 3.9L7 7.6L0.4 3.9Z" fill="#ffc9a0"/><path d="M0.4 3.9L7 7.6V15.6L0.4 12Z" fill="#ff9234"/><path d="M13.6 3.9L7 7.6V15.6L13.6 12Z" fill="#f86a00"/></g></svg>
<span class="t" style="left:223.60px;top:649.64px;font-size:12px;line-height:12px;color:#666;">cara_lateral_2</span>
<span class="t" style="left:337.00px;top:650.83px;font-size:10px;line-height:10px;color:#6a6a6a;transform:scaleX(0.9484);">V2</span>
<svg class="a" style="left:23px;top:829px;" width="14" height="16" viewBox="0 0 14 16"><g transform="scale(1.000)"><path d="M7 0.4L13.6 3.9L7 7.6L0.4 3.9Z" fill="#ffc9a0"/><path d="M0.4 3.9L7 7.6V15.6L0.4 12Z" fill="#ff9234"/><path d="M13.6 3.9L7 7.6V15.6L13.6 12Z" fill="#f86a00"/></g></svg>
<span class="t" style="left:43.60px;top:829.64px;font-size:12px;line-height:12px;color:#666;">Cara_lateral1</span>
<span class="t" style="left:157.00px;top:830.83px;font-size:10px;line-height:10px;color:#6a6a6a;transform:scaleX(0.9484);">V1</span>
<svg class="a" style="left:203px;top:829px;" width="14" height="16" viewBox="0 0 14 16"><g transform="scale(1.000)"><path d="M7 0.4L13.6 3.9L7 7.6L0.4 3.9Z" fill="#ffc9a0"/><path d="M0.4 3.9L7 7.6V15.6L0.4 12Z" fill="#ff9234"/><path d="M13.6 3.9L7 7.6V15.6L13.6 12Z" fill="#f86a00"/></g></svg>
<span class="t" style="left:223.60px;top:829.64px;font-size:12px;line-height:12px;color:#666;">Cara_lateral3</span>
<span class="t" style="left:337.00px;top:830.83px;font-size:10px;line-height:10px;color:#6a6a6a;transform:scaleX(0.9484);">V1</span>
<svg class="a" style="left:23px;top:1009px;" width="14" height="16" viewBox="0 0 14 16"><g transform="scale(1.000)"><path d="M7 0.4L13.6 3.9L7 7.6L0.4 3.9Z" fill="#ffc9a0"/><path d="M0.4 3.9L7 7.6V15.6L0.4 12Z" fill="#ff9234"/><path d="M13.6 3.9L7 7.6V15.6L13.6 12Z" fill="#f86a00"/></g></svg>
<span class="t" style="left:43.60px;top:1009.64px;font-size:12px;line-height:12px;color:#666;">Ensamble</span>
<span class="t" style="left:157.00px;top:1010.83px;font-size:10px;line-height:10px;color:#6a6a6a;transform:scaleX(0.9484);">V4</span>
<svg class="a" style="left:203px;top:1009px;" width="14" height="16" viewBox="0 0 14 16"><g transform="scale(1.000)"><path d="M7 0.4L13.6 3.9L7 7.6L0.4 3.9Z" fill="#ffc9a0"/><path d="M0.4 3.9L7 7.6V15.6L0.4 12Z" fill="#ff9234"/><path d="M13.6 3.9L7 7.6V15.6L13.6 12Z" fill="#f86a00"/></g></svg>
<span class="t" style="left:223.60px;top:1009.64px;font-size:12px;line-height:12px;color:#666;">prueba</span>
<span class="t" style="left:337.00px;top:1010.83px;font-size:10px;line-height:10px;color:#6a6a6a;transform:scaleX(0.9484);">V1</span>
<div class="a" style="left:376.5px;top:240px;width:7.2px;height:790.5px;background:#b4b4b4;border-radius:4px;"></div>
<div class="a" style="left:400px;top:55px;width:1520px;height:81px;background:#f1f1f1;"></div>
<div class="a" style="left:400px;top:136px;width:1520px;height:1px;background:#dcdcdc;"></div>
<div class="a" style="left:400px;top:137px;width:1520px;height:3px;background:linear-gradient(#ebebeb,#fbfbfb);"></div>
<svg class="a" style="left:410px;top:64px;" width="113" height="64" viewBox="0 0 113 64"><rect x="2.4" y="2.2" width="108.2" height="59.6" rx="5" fill="#f1f1f1" stroke="#d9d9d9" stroke-width="1.5"/></svg>
<span class="t" style="left:442.00px;top:89.89px;font-size:11px;line-height:11px;color:#2b2b2b;font-weight:bold;transform:scaleX(0.8915);">DISEÑO</span>
<svg class="a" style="left:484px;top:93px;" width="9" height="7" viewBox="0 0 9 7"><path d="M1 1.2H7.6L4.3 5.4Z" fill="#222"/></svg>
<span class="t" style="left:551.00px;top:60.59px;font-size:11px;line-height:11px;color:#0696d7;font-weight:bold;transform:scaleX(0.9249);">SOLIDO</span>
<div class="a" style="left:538.5px;top:75.2px;width:64px;height:3.2px;background:#0696d7;border-radius:2px;"></div>
<span class="t" style="left:638.00px;top:60.59px;font-size:11px;line-height:11px;color:#3c3c3c;transform:scaleX(0.8453);">SUPERFICIE</span>
<span class="t" style="left:741.40px;top:60.59px;font-size:11px;line-height:11px;color:#3c3c3c;transform:scaleX(0.9786);">MALLA</span>
<span class="t" style="left:824.30px;top:60.59px;font-size:11px;line-height:11px;color:#3c3c3c;transform:scaleX(0.9330);">CHAPA</span>
<span class="t" style="left:907.30px;top:60.59px;font-size:11px;line-height:11px;color:#3c3c3c;transform:scaleX(0.9062);">PLÁSTICO</span>
<span class="t" style="left:1005.20px;top:60.59px;font-size:11px;line-height:11px;color:#3c3c3c;transform:scaleX(0.8890);">UTILIDADES</span>
<span class="t" style="left:637.30px;top:120.79px;font-size:11px;line-height:11px;color:#333;transform:scaleX(0.8882);">CREAR</span>
<svg class="a" style="left:674.5px;top:123px;" width="8" height="6" viewBox="0 0 8 6"><path d="M0.6 0.8H7L3.8 4.8Z" fill="#222"/></svg>
<span class="t" style="left:809.00px;top:120.79px;font-size:11px;line-height:11px;color:#333;transform:scaleX(0.9497);">AUTOMATIZAR</span>
<svg class="a" style="left:885.5px;top:123px;" width="8" height="6" viewBox="0 0 8 6"><path d="M0.6 0.8H7L3.8 4.8Z" fill="#222"/></svg>
<span class="t" style="left:1005.50px;top:120.79px;font-size:11px;line-height:11px;color:#333;transform:scaleX(0.8830);">MODIFICAR</span>
<svg class="a" style="left:1062.5px;top:123px;" width="8" height="6" viewBox="0 0 8 6"><path d="M0.6 0.8H7L3.8 4.8Z" fill="#222"/></svg>
<span class="t" style="left:1186.10px;top:120.79px;font-size:11px;line-height:11px;color:#333;transform:scaleX(0.9417);">ENSAMBLAR</span>
<svg class="a" style="left:1252.5px;top:123px;" width="8" height="6" viewBox="0 0 8 6"><path d="M0.6 0.8H7L3.8 4.8Z" fill="#222"/></svg>
<span class="t" style="left:1289.40px;top:120.79px;font-size:11px;line-height:11px;color:#333;transform:scaleX(0.8809);">CONSTRUIR</span>
<svg class="a" style="left:1349.0px;top:123px;" width="8" height="6" viewBox="0 0 8 6"><path d="M0.6 0.8H7L3.8 4.8Z" fill="#222"/></svg>
<span class="t" style="left:1383.20px;top:120.79px;font-size:11px;line-height:11px;color:#333;transform:scaleX(0.8825);">INSPECCIONAR</span>
<svg class="a" style="left:1459.5px;top:123px;" width="8" height="6" viewBox="0 0 8 6"><path d="M0.6 0.8H7L3.8 4.8Z" fill="#222"/></svg>
<span class="t" style="left:1493.40px;top:120.79px;font-size:11px;line-height:11px;color:#333;transform:scaleX(0.8882);">INSERTAR</span>
<svg class="a" style="left:1544.5px;top:123px;" width="8" height="6" viewBox="0 0 8 6"><path d="M0.6 0.8H7L3.8 4.8Z" fill="#222"/></svg>
<span class="t" style="left:1576.30px;top:120.79px;font-size:11px;line-height:11px;color:#333;transform:scaleX(0.8966);">SELECCIONAR</span>
<svg class="a" style="left:1649.5px;top:123px;" width="8" height="6" viewBox="0 0 8 6"><path d="M0.6 0.8H7L3.8 4.8Z" fill="#222"/></svg>
<svg class="a" style="left:400px;top:55px" width="1520" height="85" viewBox="400 55 1520 85"><path d="M793.7 82V132" stroke="#d6d6d6" stroke-width="1.3"/><path d="M902.7 82V132" stroke="#d6d6d6" stroke-width="1.3"/><path d="M1172.0 82V132" stroke="#d6d6d6" stroke-width="1.3"/><path d="M1275.0 82V132" stroke="#d6d6d6" stroke-width="1.3"/><path d="M1369.0 82V132" stroke="#d6d6d6" stroke-width="1.3"/><path d="M1477.7 82V132" stroke="#d6d6d6" stroke-width="1.3"/><path d="M1561.8 82V132" stroke="#d6d6d6" stroke-width="1.3"/><g transform="translate(537,82)"><path d="M1.8 1.6H28.6M1.8 1.6V28.4M28.6 1.6V17M1.8 28.4H17" stroke="#555" stroke-width="1" fill="none"/><path d="M8.6 8.6H21.6M8.6 8.6V21.4" stroke="#555" stroke-width="1" stroke-dasharray="5 2.2" fill="none"/><path d="M21.6 10.6Q21 19.6 11 21.6" stroke="#555" stroke-width="1" fill="none"/><rect x="0.4" y="0.2" width="2.8" height="2.8" fill="#555"/><rect x="27.2" y="0.2" width="2.8" height="2.8" fill="#555"/><rect x="0.4" y="27" width="2.8" height="2.8" fill="#555"/><rect x="7.2" y="7.2" width="2.8" height="2.8" fill="#555"/><rect x="20.2" y="7.2" width="2.8" height="2.8" fill="#555"/><rect x="7.2" y="20" width="2.8" height="2.8" fill="#555"/><path d="M25.2 18.2V32M18.3 25.2H32.2" stroke="#21a945" stroke-width="4.2"/></g><g transform="translate(581,82)"><path d="M0.2 26.4H18.0V31.4H0.2Z" fill="#bdbdbd"/><path d="M0.2 26.4L6.2 20.4H24.0L18.0 26.4Z" fill="#d0d0d0"/><path d="M18.0 26.4L24.0 20.4V25.4L18.0 31.4Z" fill="#a2a2a2"/><path d="M0.2 6H18.0V26.6H0.2Z" fill="#6db1e6"/><path d="M0.2 6L6.2 0H24.0L18.0 6Z" fill="#8fcaf7"/><path d="M18.0 6L24.0 0V20.6L18.0 26.6Z" fill="#4793cd"/><path d="M27.8 3V25.6" stroke="#222" stroke-width="1.1"/><path d="M27.8 0.8L25 5.4H30.6Z" fill="#222"/></g><g transform="translate(622,82)"><path d="M1.6 6.8Q15 -2 30 7.2" stroke="#333" stroke-width="1" fill="none"/><path d="M0.6 9.4L2 3.6L6.2 7.4Z" fill="#333"/><path d="M1 15.6Q14 5.4 27 11L32.4 16.4Q18 11.6 7.6 20.2Z" fill="#8fcaf7"/><path d="M1 15.6L7.6 20.2V29.8L1 24.6Z" fill="#4793cd"/><path d="M7.6 20.2Q18 11.6 27 16L27 26.6Q17.6 22 7.6 29.8Z" fill="#6db1e6"/><path d="M27 16.2L32.4 12V23.6L27 28.6Z" fill="#fff" stroke="#555" stroke-width="1" stroke-linejoin="round"/></g><g transform="translate(666,82)"><path d="M0.6 6H26.200000000000003V31.4H0.6Z" fill="#d9d9d9" stroke="#5a5a5a" stroke-width="1" stroke-linejoin="round"/><path d="M0.6 6L6.199999999999999 0.40000000000000036H31.800000000000004L26.200000000000003 6Z" fill="#ececec" stroke="#5a5a5a" stroke-width="1" stroke-linejoin="round"/><path d="M26.200000000000003 6L31.800000000000004 0.40000000000000036V25.799999999999997L26.200000000000003 31.4Z" fill="#b5b5b5" stroke="#5a5a5a" stroke-width="1" stroke-linejoin="round"/><circle cx="13.4" cy="18.6" r="7.8" fill="#f4f4f4" stroke="#666" stroke-width="1"/><circle cx="13.4" cy="18.6" r="6" fill="#5ba3dc"/><circle cx="15.6" cy="16.4" r="4.4" fill="#e9f2fa"/></g><g transform="translate(708,82)"><path d="M4.6 8.8V23.4M8 5.6H22.6M8 26.4H22.6" stroke="#555" stroke-width="1"/><rect x="1.6" y="2.6" width="5.8" height="5.8" fill="#fff" stroke="#555" stroke-width="1"/><rect x="22.2" y="2.1" width="6.8" height="6.8" fill="#5aa7e0"/><rect x="1.1" y="23" width="6.8" height="6.8" fill="#5aa7e0"/><rect x="22.2" y="23" width="6.8" height="6.8" fill="#5aa7e0"/></g><g transform="translate(751,82)"><path d="M1 12Q1 3 10 2.6L20 2.4Q29.6 3 29.8 12V22Q29.6 30.6 21 31.4H9Q1 31 1 23Z" fill="#a57ae0"/><path d="M3 12Q3.4 5 10.6 4.6H19Q23 5 24 9L22 12H4Z" fill="#c9acf2"/><path d="M24 12.6L29.8 11.8V22Q29.6 27 25 29.6L24 28Z" fill="#8658c8"/><path d="M3.4 20H23M12.4 5V30.6" stroke="#8a5fd0" stroke-width="1" fill="none"/><path d="M1 12Q1 3 10 2.6L20 2.4Q29.6 3 29.8 12V22Q29.6 30.6 21 31.4H9Q1 31 1 23Z" fill="none" stroke="#9466d6" stroke-width="0.8"/><polygon points="23.6,0.2 24.7,5.6 29.4,2.6 26.4,7.3 31.8,8.4 26.4,9.5 29.4,14.2 24.7,11.2 23.6,16.6 22.5,11.2 17.8,14.2 20.8,9.5 15.4,8.4 20.8,7.3 17.8,2.6 22.5,5.6" fill="#ffa200"/></g><g transform="translate(832,82)"><path d="M6 6Q12 8 16.4 17Q20 10 27.4 9.4" stroke="#4793cd" stroke-width="4.2" fill="none"/><path d="M13.2 13.6L20.4 12.8L17.6 20.6L16.6 26L14.2 20.4Z" fill="#4793cd"/><path d="M15.4 14.6L18.4 14.4L16.8 18.6Z" fill="#f1f1f1"/><circle cx="16.4" cy="26.4" r="4.6" fill="#4793cd"/><circle cx="16.4" cy="26.4" r="2.9" fill="#f1f1f1" stroke="#555" stroke-width="0.8"/><path d="M16.4 24.6V28.2M14.6 26.4H18.2" stroke="#555" stroke-width="0.8"/><rect x="2.4" y="1.2" width="6.2" height="6.2" fill="#fff" stroke="#555" stroke-width="1"/><path d="M24.6 6.2L29 3.4L33 8.4L28.6 11.6Z" fill="#fff" stroke="#555" stroke-width="1" stroke-linejoin="round"/></g><g transform="translate(916,82)"><path d="M0.6 6L5.6 0.6H10V31.4H0.6Z" fill="#dcdcdc" stroke="#5a5a5a" stroke-width="1" stroke-linejoin="round"/><path d="M7.4 6L12.4 0.6H21.8L16.8 6Z" fill="#8fcaf7"/><path d="M7.4 6H16.8V31.4H7.4Z" fill="#6db1e6"/><path d="M16.8 6L21.8 0.6V26.4L16.8 31.4Z" fill="#4793cd"/><path d="M19.6 15.6H27" stroke="#222" stroke-width="1.2"/><path d="M19.6 14.4H22.6" stroke="#fff" stroke-width="0.9"/><path d="M29.6 15.6L25.4 12.8V18.4Z" fill="#222"/></g><g transform="translate(958,82)"><path d="M0.6 6.6L6.6 0.6H16Q27 2 32 13.6V25.6L25 31.4H0.6Z" fill="#d9d9d9" stroke="#5a5a5a" stroke-width="1" stroke-linejoin="round"/><path d="M25 31.4V20.6L32 14V25.6Z" fill="#b5b5b5" stroke="#5a5a5a" stroke-width="1" stroke-linejoin="round"/><path d="M12.4 6.6L17.4 0.8Q28 2.6 32 14L25.6 20.4Q22.6 10 12.4 6.6Z" fill="#6db1e6"/></g><g transform="translate(1001,82)"><path d="M0.6 6.6H25.200000000000003V31.4H0.6Z" fill="#d9d9d9" stroke="#5a5a5a" stroke-width="1" stroke-linejoin="round"/><path d="M0.6 6.6L6.6 0.5999999999999996H31.200000000000003L25.200000000000003 6.6Z" fill="#ececec" stroke="#5a5a5a" stroke-width="1" stroke-linejoin="round"/><path d="M25.200000000000003 6.6L31.200000000000003 0.5999999999999996V25.4L25.200000000000003 31.4Z" fill="#b5b5b5" stroke="#5a5a5a" stroke-width="1" stroke-linejoin="round"/><path d="M4.6 12.6H21V27.6H4.6Z" fill="#f6f6f6"/><path d="M4.6 12.6H12.2V20.8H21V27.6H4.6Z" fill="#8fcaf7"/><path d="M4.6 12.6H12.2V20.8L4.6 27.6Z" fill="#4793cd"/></g><g transform="translate(1044,82)"><path d="M10.6 5.6H27.200000000000003V22.200000000000003H10.6Z" fill="#6db1e6"/><path d="M10.6 5.6L15.6 0.5999999999999996H32.2L27.200000000000003 5.6Z" fill="#8fcaf7"/><path d="M27.200000000000003 5.6L32.2 0.5999999999999996V17.200000000000003L27.200000000000003 22.200000000000003Z" fill="#4793cd"/><path d="M0.4 15H17.799999999999997V31.6H0.4Z" fill="#6db1e6"/><path d="M0.4 15L5.4 10H22.799999999999997L17.799999999999997 15Z" fill="#8fcaf7"/><path d="M17.799999999999997 15L22.799999999999997 10V26.6L17.799999999999997 31.6Z" fill="#4793cd"/><path d="M10.6 15.2H17.8V22.2H10.6Z" fill="#6db1e6"/></g><g transform="translate(1087,82)"><path d="M2.4 19H24.2V29H2.4Z" fill="#d9d9d9" stroke="#5a5a5a" stroke-width="1" stroke-linejoin="round"/><path d="M2.4 19L7.6 13.8H29.4L24.2 19Z" fill="#ececec" stroke="#5a5a5a" stroke-width="1" stroke-linejoin="round"/><path d="M24.2 19L29.4 13.8V23.8L24.2 29Z" fill="#b5b5b5" stroke="#5a5a5a" stroke-width="1" stroke-linejoin="round"/><path d="M2.4 5.6H24.2V17.0H2.4Z" fill="#6db1e6"/><path d="M2.4 5.6L7.6 0.39999999999999947H29.4L24.2 5.6Z" fill="#8fcaf7"/><path d="M24.2 5.6L29.4 0.39999999999999947V11.8L24.2 17.0Z" fill="#4793cd"/><path d="M0 18.4H25L32.4 9.6" stroke="#2e8fe0" stroke-width="1.2" fill="none"/><path d="M0 19.8H25.4L32.4 11.4" stroke="#fff" stroke-width="1" fill="none"/></g><g transform="translate(1130,82)"><path d="M16 5V27M5 16H27" stroke="#333" stroke-width="2.2"/><path d="M16 0.6L11.2 8.4H20.8Z M16 31.4L11.2 23.6H20.8Z M0.6 16L8.4 11.2V20.8Z M31.4 16L23.6 11.2V20.8Z" fill="#333"/></g><g transform="translate(1187,82)"><path d="M0.6 19.4H12.2V31.4H0.6Z" fill="#d9d9d9" stroke="#5a5a5a" stroke-width="1" stroke-linejoin="round"/><path d="M0.6 19.4L4.2 15.799999999999999H15.799999999999999L12.2 19.4Z" fill="#ececec" stroke="#5a5a5a" stroke-width="1" stroke-linejoin="round"/><path d="M12.2 19.4L15.799999999999999 15.799999999999999V27.799999999999997L12.2 31.4Z" fill="#b5b5b5" stroke="#5a5a5a" stroke-width="1" stroke-linejoin="round"/><path d="M12.6 19.4H24.2V31.4H12.6Z" fill="#d9d9d9" stroke="#5a5a5a" stroke-width="1" stroke-linejoin="round"/><path d="M12.6 19.4L16.2 15.799999999999999H27.8L24.2 19.4Z" fill="#ececec" stroke="#5a5a5a" stroke-width="1" stroke-linejoin="round"/><path d="M24.2 19.4L27.8 15.799999999999999V27.799999999999997L24.2 31.4Z" fill="#b5b5b5" stroke="#5a5a5a" stroke-width="1" stroke-linejoin="round"/><path d="M0.2 7.6H12.2V19.2H0.2Z" fill="#6db1e6"/><path d="M0.2 7.6L3.8000000000000003 3.9999999999999996H15.799999999999999L12.2 7.6Z" fill="#8fcaf7"/><path d="M12.2 7.6L15.799999999999999 3.9999999999999996V15.6L12.2 19.2Z" fill="#4793cd"/><polygon points="23.2,0.4 24.3,5.8 28.9,2.7 25.8,7.3 31.2,8.4 25.8,9.5 28.9,14.1 24.3,11.0 23.2,16.4 22.1,11.0 17.5,14.1 20.6,9.5 15.2,8.4 20.6,7.3 17.5,2.7 22.1,5.8" fill="#ffa200"/></g><g transform="translate(1231,82)"><path d="M0.8 11L6.6 3.4Q9.6 1.6 12.6 3.4V12.6L6.4 25.6L1.4 29.6Z" fill="#c4c4c4" stroke="#5a5a5a" stroke-width="1" stroke-linejoin="round"/><path d="M6.4 5Q9.4 2.6 12.6 4.6V12.4Q9.4 14 6.4 12.4Z" fill="#e6e6e6" stroke="#777" stroke-width="0.7"/><path d="M21 7.6L22.6 5.2L27.8 10.4V29.6L21 23.6Z" fill="#dcdcdc" stroke="#5a5a5a" stroke-width="1" stroke-linejoin="round"/><path d="M16 15Q18.6 12.6 21.4 14.6V24.4Q18.6 26.4 16 24Z" fill="#c4c4c4" stroke="#5a5a5a" stroke-width="0.9"/><path d="M9.4 17V21.6M18.6 8.6V13.6" stroke="#2e8fe0" stroke-width="1.1"/></g><g transform="translate(1307,82)"><path d="M0.8 9.6L8.6 1H16V31.2H0.8Z" fill="#dedede" stroke="#5a5a5a" stroke-width="1" stroke-linejoin="round"/><path d="M9.2 9.6L17.8 1V22.6L9.2 31Z" fill="#5fc47e"/><path d="M21.4 9.6L30.2 1V22.6L21.4 31Z" fill="#e6975f"/></g><g transform="translate(1409.6,91.3)"><rect x="0.4" y="8.6" width="27.8" height="5.8" fill="#ffa400"/><path d="M3.2 8.6V11.6" stroke="#7a4b00" stroke-width="0.8"/><path d="M6.6 8.6V10.6" stroke="#7a4b00" stroke-width="0.8"/><path d="M10.0 8.6V11.6" stroke="#7a4b00" stroke-width="0.8"/><path d="M13.399999999999999 8.6V10.6" stroke="#7a4b00" stroke-width="0.8"/><path d="M16.8 8.6V11.6" stroke="#7a4b00" stroke-width="0.8"/><path d="M20.2 8.6V10.6" stroke="#7a4b00" stroke-width="0.8"/><path d="M23.599999999999998 8.6V11.6" stroke="#7a4b00" stroke-width="0.8"/><path d="M27.0 8.6V10.6" stroke="#7a4b00" stroke-width="0.8"/><path d="M0.9 0.6V7M27.7 0.6V7M3 3.6H25.6" stroke="#555" stroke-width="1" fill="none"/><path d="M1.6 3.6L5.4 1.4V5.8Z M27 3.6L23.2 1.4V5.8Z" fill="#555"/></g><g transform="translate(1506,83)"><rect x="0" y="0" width="29" height="29" fill="#8fcaf7"/><path d="M0 17Q5.4 9.6 10.6 14.4Q14 17.6 17 21.4Q20.6 17 24 18.6Q27 20.6 29 24V29H0Z" fill="#3f8fca"/><circle cx="21" cy="8" r="3.1" fill="#fffbd0"/><rect x="0.5" y="0.5" width="28" height="28" fill="none" stroke="#3f8fca" stroke-width="1"/></g><g transform="translate(1598,79)"><rect x="0" y="0" width="38" height="38" fill="#0696d7"/><rect x="3.6" y="3.6" width="27" height="21" fill="none" stroke="#9be06c" stroke-width="1" stroke-dasharray="4 2.4"/><path d="M24 17.4L24 31.4L27.2 28.4L29.6 34.4L32.2 33.2L29.8 27.4H34.4Z" fill="#fff"/></g></svg>
<div class="a" style="left:404px;top:144px;width:300px;height:25px;background:#f2f2f2;box-sizing:border-box;border:1px solid #cfcfcf;"></div>
<svg class="a" style="left:408px;top:153px;" width="13" height="8" viewBox="0 0 13 8"><path d="M6 0.6V7L1 3.8Z M11.6 0.6V7L6.6 3.8Z" fill="#333"/></svg>
<span class="t" style="left:429.00px;top:150.59px;font-size:11px;line-height:11px;color:#666;transform:scaleX(0.9500);">NAVEGADOR</span>
<svg class="a" style="left:682px;top:151px;" width="11" height="11" viewBox="0 0 11 11"><circle cx="5.5" cy="5.5" r="4.6" fill="#222"/><path d="M2.8 5.5H8.2" stroke="#fff" stroke-width="1.4"/></svg>
<div class="a" style="left:440px;top:174px;width:164px;height:20px;background:#f0f0f0;"></div>
<div class="a" style="left:458px;top:198px;width:182px;height:19.6px;background:#f0f0f0;"></div>
<div class="a" style="left:458px;top:222px;width:130px;height:19.6px;background:#f0f0f0;"></div>
<div class="a" style="left:458px;top:246px;width:98.5px;height:19.6px;background:#f0f0f0;"></div>
<div class="a" style="left:458px;top:270px;width:110.5px;height:19.6px;background:#f0f0f0;"></div>
<div class="a" style="left:458px;top:294px;width:106.5px;height:19.6px;background:#f0f0f0;"></div>
<svg class="a" style="left:420px;top:177px;" width="13" height="14" viewBox="0 0 13 14"><defs><linearGradient id="tg" x1="0" y1="0" x2="1" y2="1"><stop offset="0.3" stop-color="#fff"/><stop offset="1" stop-color="#666"/></linearGradient></defs><path d="M11.6 1.6V12.4H1.2Z" fill="url(#tg)" stroke="#222" stroke-width="1" stroke-linejoin="round"/></svg>
<svg class="a" style="left:443px;top:178px;" width="16" height="12" viewBox="0 0 16 12"><path d="M0.4 6Q8 -1.6 15.6 6Q8 13.6 0.4 6Z" fill="#9a9a9a"/><circle cx="8" cy="6" r="3" fill="#f0f0f0"/><circle cx="8" cy="6" r="1.7" fill="#9a9a9a"/></svg>
<div class="a" style="left:465px;top:176px;width:114px;height:15.6px;background:#999;"></div>
<svg class="a" style="left:468px;top:176px;" width="16" height="16" viewBox="0 0 16 16"><path d="M1 4.4L4.4 0.8H14.6V11.4L11.2 15H1Z" fill="#e2e4ea" stroke="#333" stroke-width="0.9" stroke-linejoin="round"/><path d="M1 4.4H11.2V15M11.2 4.4L14.6 0.8" fill="none" stroke="#fff" stroke-width="0.8"/><path d="M1.6 5H10.6V14.4H1.6Z" fill="#dfe2ea"/></svg>
<span class="t" style="left:498.00px;top:178.89px;font-size:11px;line-height:11px;color:#fff;font-weight:bold;transform:scaleX(1.0331);">cara_base v3</span>
<svg class="a" style="left:582px;top:177px;" width="15" height="15" viewBox="0 0 15 15"><circle cx="7.4" cy="7.4" r="6" fill="#fff" stroke="#222" stroke-width="1"/><circle cx="7.4" cy="7.4" r="2.3" fill="#222"/></svg>
<svg class="a" style="left:439px;top:201px;" width="11" height="14" viewBox="0 0 11 14"><path d="M1.4 1.2L9 7L1.4 12.8Z" fill="#e4e4ec" stroke="#333" stroke-width="1.5" stroke-linejoin="round"/></svg>
<svg class="a" style="left:461px;top:200px;" width="16.5" height="16.5" viewBox="0 0 16.5 16.5"><polygon points="7.1,2.5 7.2,0.4 9.3,0.4 9.4,2.5 11.5,3.3 13.1,1.9 14.6,3.4 13.2,5.0 14.0,7.1 16.1,7.2 16.1,9.3 14.0,9.4 13.2,11.5 14.6,13.1 13.1,14.6 11.5,13.2 9.4,14.0 9.3,16.1 7.2,16.1 7.1,14.0 5.0,13.2 3.4,14.6 1.9,13.1 3.3,11.5 2.5,9.4 0.4,9.3 0.4,7.2 2.5,7.1 3.3,5.0 1.9,3.4 3.4,1.9 5.0,3.3" fill="#9a9a9a"/><circle cx="8.25" cy="8.25" r="5.77" fill="#9a9a9a"/><circle cx="8.25" cy="8.25" r="2.86" fill="#f0f0f0"/></svg>
<span class="t" style="left:491.20px;top:203.09px;font-size:11px;line-height:11px;color:#333;transform:scaleX(0.9785);">Configuración del documento</span>
<svg class="a" style="left:439px;top:225px;" width="11" height="14" viewBox="0 0 11 14"><path d="M1.4 1.2L9 7L1.4 12.8Z" fill="#e4e4ec" stroke="#333" stroke-width="1.5" stroke-linejoin="round"/></svg>
<svg class="a" style="left:461px;top:225.5px;" width="16" height="13" viewBox="0 0 16 13"><path d="M0 2.4H7V3.4H16V12.6H0Z" fill="#9a9a9a"/><path d="M0 0.4H6.4L7 2.4H0Z" fill="#9a9a9a"/><path d="M0 2.6H16" stroke="#f0f0f0" stroke-width="0.5"/></svg>
<span class="t" style="left:491.00px;top:227.19px;font-size:11px;line-height:11px;color:#333;transform:scaleX(1.0095);">Vistas guardadas</span>
<svg class="a" style="left:439px;top:249px;" width="11" height="14" viewBox="0 0 11 14"><path d="M1.4 1.2L9 7L1.4 12.8Z" fill="#e4e4ec" stroke="#333" stroke-width="1.5" stroke-linejoin="round"/></svg>
<svg class="a" style="left:461px;top:250px;" width="16" height="12" viewBox="0 0 16 12"><path d="M0.8 6Q8 -1 15.2 6Q8 13 0.8 6Z" fill="none" stroke="#9a9a9a" stroke-width="1"/><circle cx="8" cy="6" r="2.6" fill="none" stroke="#9a9a9a" stroke-width="1"/><path d="M2.6 0.4L13.6 11.6" stroke="#9a9a9a" stroke-width="1"/></svg>
<svg class="a" style="left:486px;top:249.5px;" width="16" height="13" viewBox="0 0 16 13"><path d="M0 2.4H7V3.4H16V12.6H0Z" fill="#9a9a9a"/><path d="M0 0.4H6.4L7 2.4H0Z" fill="#9a9a9a"/><path d="M0 2.6H16" stroke="#f0f0f0" stroke-width="0.5"/></svg>
<span class="t" style="left:516.30px;top:251.19px;font-size:11px;line-height:11px;color:#333;transform:scaleX(0.9541);">Origen</span>
<svg class="a" style="left:439px;top:273px;" width="11" height="14" viewBox="0 0 11 14"><path d="M1.4 1.2L9 7L1.4 12.8Z" fill="#e4e4ec" stroke="#333" stroke-width="1.5" stroke-linejoin="round"/></svg>
<svg class="a" style="left:461px;top:274px;" width="16" height="12" viewBox="0 0 16 12"><path d="M0.4 6Q8 -1.6 15.6 6Q8 13.6 0.4 6Z" fill="#9a9a9a"/><circle cx="8" cy="6" r="3" fill="#f0f0f0"/><circle cx="8" cy="6" r="1.7" fill="#9a9a9a"/></svg>
<svg class="a" style="left:486px;top:273.5px;" width="16" height="13" viewBox="0 0 16 13"><path d="M0 2.4H7V3.4H16V12.6H0Z" fill="#9a9a9a"/><path d="M0 0.4H6.4L7 2.4H0Z" fill="#9a9a9a"/><path d="M0 2.6H16" stroke="#f0f0f0" stroke-width="0.5"/></svg>
<span class="t" style="left:516.30px;top:275.19px;font-size:11px;line-height:11px;color:#333;transform:scaleX(0.9693);">Cuerpos</span>
<svg class="a" style="left:439px;top:297px;" width="11" height="14" viewBox="0 0 11 14"><path d="M1.4 1.2L9 7L1.4 12.8Z" fill="#e4e4ec" stroke="#333" stroke-width="1.5" stroke-linejoin="round"/></svg>
<svg class="a" style="left:461px;top:298px;" width="16" height="12" viewBox="0 0 16 12"><path d="M0.4 6Q8 -1.6 15.6 6Q8 13.6 0.4 6Z" fill="#9a9a9a"/><circle cx="8" cy="6" r="3" fill="#f0f0f0"/><circle cx="8" cy="6" r="1.7" fill="#9a9a9a"/></svg>
<svg class="a" style="left:486px;top:297.5px;" width="16" height="13" viewBox="0 0 16 13"><path d="M0 2.4H7V3.4H16V12.6H0Z" fill="#9a9a9a"/><path d="M0 0.4H6.4L7 2.4H0Z" fill="#9a9a9a"/><path d="M0 2.6H16" stroke="#f0f0f0" stroke-width="0.5"/></svg>
<span class="t" style="left:516.30px;top:299.19px;font-size:11px;line-height:11px;color:#333;transform:scaleX(0.9964);">Bocetos</span>
<div class="a" style="left:404px;top:961px;width:300px;height:25px;background:#f2f2f2;box-sizing:border-box;border:1px solid #d2d2d2;border-top-color:#efefef;"></div>
<span class="t" style="left:429.30px;top:967.89px;font-size:11px;line-height:11px;color:#666;transform:scaleX(0.8942);">COMENTARIOS</span>
<svg class="a" style="left:682px;top:968px;" width="11" height="11" viewBox="0 0 11 11"><circle cx="5.5" cy="5.5" r="4.6" fill="#222"/><path d="M2.8 5.5H8.2M5.5 2.8V8.2" stroke="#fff" stroke-width="1.3"/></svg>
<div class="a" style="left:1042px;top:960px;width:237px;height:24px;background:#f0f0f0;"></div>
<svg class="a" style="left:1040px;top:958px" width="242" height="30" viewBox="1040 958 242 30"><g transform="translate(1045,963)"><path d="M11 8.2Q15.4 8.8 15.4 10.2Q15.4 12.4 8 12.4Q3.4 12.4 2 11.4" fill="none" stroke="#3a3f4a" stroke-width="1.3"/><path d="M5 8.2Q0.8 8.8 0.8 10.2" fill="none" stroke="#3a3f4a" stroke-width="1.3"/><path d="M8 0.4L4.8 4.4H6.5V16.8H9.5V4.4H11.2Z" fill="#fff" stroke="#3a3f4a" stroke-width="0.8" stroke-linejoin="round"/><path d="M1.6 11.6L5.4 9.4V13.8Z" fill="#3a3f4a"/></g><g transform="translate(1078,963)"><path d="M2 6.4L5.4 1.6L8 4.2L12.6 2.4L14 6.4" fill="#aeb4c0" stroke="#3a3f4a" stroke-width="0.9"/><rect x="0.8" y="6.4" width="14.4" height="9.2" fill="#fff" stroke="#3a3f4a" stroke-width="1.2"/><rect x="3.6" y="9.4" width="8.8" height="3.4" fill="#9aa4b8" stroke="#3a3f4a" stroke-width="0.9"/></g><g transform="translate(1104,963)"><path d="M4.4 9.6V3.4Q5.4 2 6.4 3.4V8M6.4 3V1.8Q7.6 0.6 8.6 1.8V8M8.6 2.6Q9.8 1.4 10.8 2.6V8.4M10.8 4.4Q12 3.4 13 4.6V10.6Q13 15 10 16H6.6Q4.6 15.4 3.4 13L1 9.4Q1.6 8 3 8.8L4.4 10.6" fill="#fff" stroke="#3a3f4a" stroke-width="1" stroke-linejoin="round"/></g><g transform="translate(1129,963)"><circle cx="6" cy="7.6" r="4.6" fill="#e8f4f8" stroke="#3a3f4a" stroke-width="1.3"/><path d="M9.4 11L13 14.8" stroke="#3a3f4a" stroke-width="2.4" stroke-linecap="round"/><path d="M12 3.4H16M14 1.4V5.4M12 7.2H16" stroke="#3a3f4a" stroke-width="0.9"/></g><g transform="translate(1156,963)"><rect x="0.6" y="1" width="14.8" height="14.2" fill="none" stroke="#3a3f4a" stroke-width="0.8" stroke-dasharray="2 1.6"/><circle cx="7.4" cy="7" r="5.6" fill="#e4eff0" stroke="#3a3f4a" stroke-width="1.3"/><path d="M11.4 11.4L15 15.2" stroke="#3a3f4a" stroke-width="2.6" stroke-linecap="round"/></g><g transform="translate(1189,963)"><rect x="0.8" y="1" width="14.4" height="11.2" rx="1" fill="#fff" stroke="#3a3f4a" stroke-width="1.2"/><rect x="2.8" y="3" width="10.4" height="7.2" fill="#8fb0e4" stroke="#4a68a8" stroke-width="0.7"/><path d="M5 15.4H11M6.4 12.4V15H9.6V12.4" fill="#fff" stroke="#3a3f4a" stroke-width="0.9"/></g><g transform="translate(1220,963)"><rect x="0.6" y="0.8" width="14.8" height="15" fill="#6d727e"/><path d="M4.5 1V15.6M0.6 4.9H15.4" stroke="#e4e6ec" stroke-width="0.8"/><path d="M8.0 1V15.6M0.6 8.4H15.4" stroke="#e4e6ec" stroke-width="0.8"/><path d="M11.5 1V15.6M0.6 11.9H15.4" stroke="#e4e6ec" stroke-width="0.8"/></g><g transform="translate(1250.6,964)"><rect x="0.8" y="0.8" width="6.4" height="5.4" rx="0.8" fill="#8fa8dc" stroke="#33508e" stroke-width="1"/><rect x="2.6" y="2.4000000000000004" width="2.8" height="2.2" fill="#b4c6ec" stroke="#5e7ab8" stroke-width="0.5"/><rect x="8.4" y="0.8" width="6.4" height="5.4" rx="0.8" fill="#8fa8dc" stroke="#33508e" stroke-width="1"/><rect x="10.200000000000001" y="2.4000000000000004" width="2.8" height="2.2" fill="#b4c6ec" stroke="#5e7ab8" stroke-width="0.5"/><rect x="0.8" y="7.6" width="6.4" height="5.4" rx="0.8" fill="#8fa8dc" stroke="#33508e" stroke-width="1"/><rect x="2.6" y="9.2" width="2.8" height="2.2" fill="#b4c6ec" stroke="#5e7ab8" stroke-width="0.5"/><rect x="8.4" y="7.6" width="6.4" height="5.4" rx="0.8" fill="#8fa8dc" stroke="#33508e" stroke-width="1"/><rect x="10.200000000000001" y="9.2" width="2.8" height="2.2" fill="#b4c6ec" stroke="#5e7ab8" stroke-width="0.5"/></g><path d="M1066 969.4H1072.4L1069.2 973.8Z" fill="#222"/><path d="M1177 969.4H1183.4L1180.2 973.8Z" fill="#222"/><path d="M1208 969.4H1214.4L1211.2 973.8Z" fill="#222"/><path d="M1238 969.4H1244.4L1241.2 973.8Z" fill="#222"/><path d="M1269 969.4H1275.4L1272.2 973.8Z" fill="#222"/></svg>
<div class="a" style="left:400px;top:990px;width:1520px;height:48px;background:#f1f1f1;"></div>
<div class="a" style="left:400px;top:990px;width:1520px;height:1px;background:#d6d6d6;"></div>
<svg class="a" style="left:400px;top:991px" width="400" height="47" viewBox="400 991 400 47"><path d="M411 1008H413V1022H411Z M423 1008.4V1021.6L413.6 1015Z" fill="#3e3e3e"/><path d="M445 1008.6V1021.4L435.4 1015Z M446.4 1012H448.2V1018H446.4Z" fill="#3e3e3e"/><path d="M461 1007.4V1022.6L473 1015Z" fill="#3e3e3e"/><path d="M488 1008.6V1021.4L497.6 1015Z M485 1012H486.8V1018H485Z" fill="#3e3e3e"/><path d="M511 1008.4V1021.6L520.4 1015Z M521 1008H523V1022H521Z" fill="#3e3e3e"/><g transform="translate(546,1006)"><rect x="1.4" y="1.4" width="12.4" height="12.4" fill="none" stroke="#555" stroke-width="1" stroke-dasharray="5 2"/><rect x="0.2" y="0.2" width="2" height="2" fill="#0a84e6"/><rect x="13" y="0.2" width="2" height="2" fill="#0a84e6"/><rect x="0.2" y="13" width="2" height="2" fill="#0a84e6"/><path d="M8.6 14.6L14 9.2L15.8 11L10.4 16.4Z" fill="#f7c552"/><path d="M14 9.2L15 8.2Q16 7.8 16.6 8.8L16.8 10L15.8 11Z" fill="#ee4444"/><path d="M8.6 14.6L10.4 16.4L7.6 17Z" fill="#555"/></g><g transform="translate(569.6,1006)"><path d="M0.2 12.4H11.4L14.4 9.6V12L11.4 15.4H0.2Z" fill="#c6c6c6"/><path d="M0.4 3.4H11.2V12.4H0.4Z" fill="#6db1e6"/><path d="M0.4 3.4L3.4 0.6H14.2L11.2 3.4Z" fill="#8fcaf7"/><path d="M11.2 3.4L14.2 0.6V9.6L11.2 12.4Z" fill="#4793cd"/><path d="M16.6 2V13.4" stroke="#222" stroke-width="1"/><path d="M16.6 0.4L15 3.2H18.2Z" fill="#222"/></g><path d="M554.5 1026V1030.5H579.5V1026" fill="none" stroke="#c9c9c9" stroke-width="1.6"/><path d="M584 1000H596.2V1002.6L591.2 1008.4V1032H589.4V1008.4L584 1002.6Z" fill="#555"/></svg>
<svg class="a" style="left:1890.5px;top:1006.5px;" width="17" height="17" viewBox="0 0 17 17"><polygon points="7.3,2.6 7.4,0.4 9.6,0.4 9.7,2.6 11.8,3.4 13.5,2.0 15.0,3.5 13.6,5.2 14.4,7.3 16.6,7.4 16.6,9.6 14.4,9.7 13.6,11.8 15.0,13.5 13.5,15.0 11.8,13.6 9.7,14.4 9.6,16.6 7.4,16.6 7.3,14.4 5.2,13.6 3.5,15.0 2.0,13.5 3.4,11.8 2.6,9.7 0.4,9.6 0.4,7.4 2.6,7.3 3.4,5.2 2.0,3.5 3.5,2.0 5.2,3.4" fill="#8a8a8a"/><circle cx="8.5" cy="8.5" r="5.95" fill="#8a8a8a"/><circle cx="8.5" cy="8.5" r="2.95" fill="#f1f1f1"/></svg>
<svg class="a" style="left:1790px;top:150px" width="130" height="120" viewBox="1790 150 130 120"><defs><filter id="vsh" x="-30%" y="-30%" width="160%" height="160%"><feGaussianBlur stdDeviation="4"/></filter><linearGradient id="vt" x1="0" y1="0" x2="0" y2="1"><stop offset="0" stop-color="#f4f4f4"/><stop offset="1" stop-color="#e9e9e9"/></linearGradient><linearGradient id="vf" x1="0" y1="0" x2="0" y2="1"><stop offset="0" stop-color="#eeeeee"/><stop offset="1" stop-color="#e0e0e0"/></linearGradient></defs><path d="M1832 226L1858 246L1896 222L1890 240L1860 258L1826 238Z" fill="#000" opacity="0.16" filter="url(#vsh)"/><path d="M1821.8 183.5L1856.5 167.6L1891.8 183.5L1856.5 202.6Z" fill="url(#vt)" stroke="#6c6c6c" stroke-width="0.7" stroke-linejoin="round"/><path d="M1821.8 183.5L1856.5 202.6V244.3L1824.7 222.3Z" fill="url(#vf)" stroke="#6c6c6c" stroke-width="0.7" stroke-linejoin="round"/><path d="M1856.5 202.6L1891.8 183.5L1887.7 221.1L1856.5 244.3Z" fill="#e6e6e6" stroke="#6c6c6c" stroke-width="0.7" stroke-linejoin="round"/><path d="M1820.4 177L1824.7 222.3" stroke="#6a6af0" stroke-width="1.6"/><path d="M1824.7 222.3L1863 249.6" stroke="#f08a8a" stroke-width="1.6"/><text transform="matrix(0.8 0.38 -0.8 0.36 1842 178)" font-family="Liberation Sans,sans-serif" font-size="8" fill="#6e737c" font-weight="bold" textLength="36" lengthAdjust="spacingAndGlyphs">SUPERIOR</text><text transform="matrix(0.82 0.55 0 1 1826.6 208.6)" font-family="Liberation Sans,sans-serif" font-size="8.4" fill="#6e737c" font-weight="bold" textLength="32" lengthAdjust="spacingAndGlyphs">FRONTAL</text><text transform="matrix(0.82 -0.52 0 1 1860.6 226)" font-family="Liberation Sans,sans-serif" font-size="8.4" fill="#6e737c" font-weight="bold" textLength="33" lengthAdjust="spacingAndGlyphs">DERECHA</text><text x="1814" y="173" font-family="Liberation Sans,sans-serif" font-size="13" font-weight="bold" fill="#7474ff">Z</text><text x="1862.6" y="258.6" font-family="Liberation Sans,sans-serif" font-size="13" font-weight="bold" fill="#ff7e7e">X</text></svg>
</body></html>
